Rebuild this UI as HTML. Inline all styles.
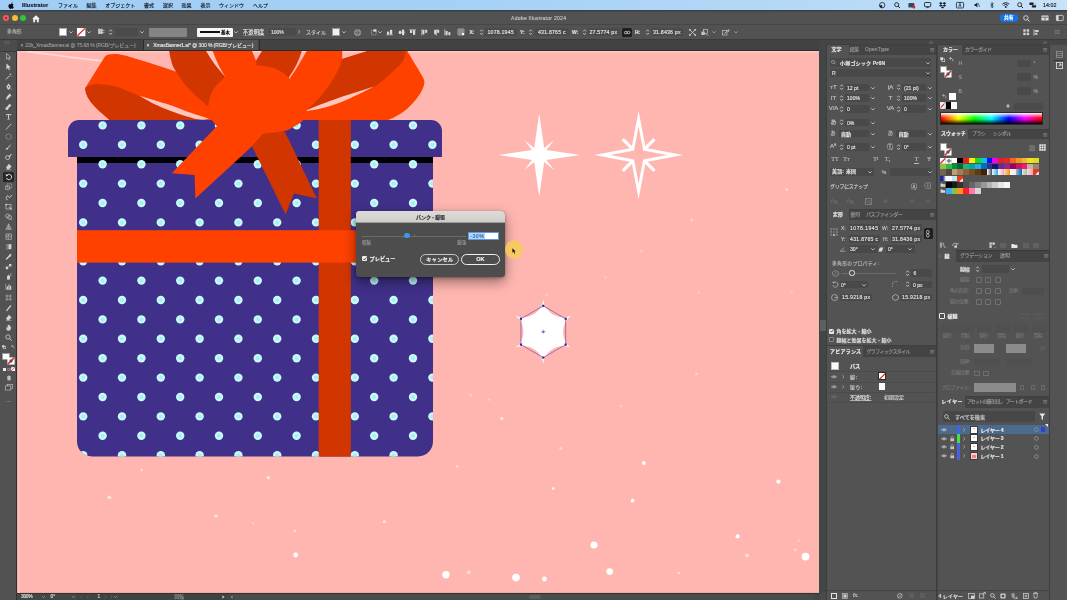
<!DOCTYPE html>
<html lang="ja"><head><meta charset="utf-8"><title>Adobe Illustrator 2024</title>
<style>
html,body{margin:0;padding:0}
body{width:1067px;height:600px;overflow:hidden;position:relative;background:#4b4b4b;font-family:"Liberation Sans","Noto Sans CJK JP",sans-serif}
.a{position:absolute;box-sizing:border-box}
#root{position:absolute;left:-8px;top:-8px;width:1083px;height:616px;overflow:hidden;filter:blur(0.45px)}
#in{position:absolute;left:8px;top:8px;width:1067px;height:600px;will-change:transform}
.t{white-space:nowrap;-webkit-text-stroke:0.14px currentColor}
svg{position:absolute;overflow:visible}
</style></head><body><div id="root"><div id="in">
<svg class="a" style="left:0;top:0" width="1067" height="600" viewBox="0 0 1067 600">
<defs><clipPath id="cv"><rect x="17.2" y="51" width="801.9" height="541.9"/></clipPath><clipPath id="bx"><path d="M77,157H433V441.500a15,15 0 0 1 -15,15H92a15,15 0 0 1 -15,-15Z"/></clipPath><clipPath id="ld"><path d="M68,157V132a12,12 0 0 1 12,-12H430a12,12 0 0 1 12,12V157Z"/></clipPath><g id="dt"><circle r="4.2" fill="#c8f9fb"/><circle r="2" fill="#a9eef1"/></g></defs>
<g clip-path="url(#cv)">
<rect x="17.2" y="51" width="801.9" height="541.9" fill="#ffb6b0"/>
<rect x="17" y="51" width="803" height="1.3" fill="#ffcdc6"/>
<rect x="17.2" y="51" width="2.6" height="542" fill="#ffc1bb"/>
<path d="M27,51.6 C50,54 76,58.6 104,61" fill="none" stroke="#ffdcd6" stroke-width="1.7" opacity=".95"/>
<circle cx="470.6" cy="395" r="1.5" fill="#fff" opacity="0.35"/>
<circle cx="489.4" cy="399.5" r="1.3" fill="#fff" opacity="0.3"/>
<circle cx="501.7" cy="418.5" r="1.7" fill="#fff" opacity="0.6"/>
<circle cx="620.6" cy="406.2" r="1.2" fill="#fff" opacity="0.35"/>
<circle cx="560.8" cy="448.5" r="1.6" fill="#fff" opacity="0.45"/>
<circle cx="643.8" cy="462.9" r="2" fill="#fff" opacity="1"/>
<circle cx="457.2" cy="466.4" r="1.4" fill="#fff" opacity="0.4"/>
<circle cx="553.2" cy="488.6" r="1.4" fill="#fff" opacity="0.85"/>
<circle cx="632.6" cy="500.7" r="1.9" fill="#fff" opacity="1"/>
<circle cx="778.4" cy="481.6" r="2.1" fill="#fff" opacity="1"/>
<circle cx="737.6" cy="536.4" r="2.1" fill="#fff" opacity="1"/>
<circle cx="594" cy="545" r="3.6" fill="#fff" opacity="1"/>
<circle cx="747" cy="555.5" r="2" fill="#fff" opacity="0.5"/>
<circle cx="795" cy="549.8" r="1.6" fill="#fff" opacity="0.4"/>
<circle cx="798.7" cy="540.5" r="1.2" fill="#fff" opacity="0.35"/>
<circle cx="805.5" cy="556.6" r="3.9" fill="#fff" opacity="1"/>
<circle cx="446" cy="574.8" r="3.7" fill="#fff" opacity="1"/>
<circle cx="468.9" cy="572.3" r="1.7" fill="#fff" opacity="0.6"/>
<circle cx="516" cy="577.6" r="3.8" fill="#fff" opacity="1"/>
<circle cx="544.4" cy="579" r="2.4" fill="#fff" opacity="1"/>
<circle cx="609.7" cy="571.6" r="3.3" fill="#fff" opacity="1"/>
<circle cx="678.7" cy="573" r="1.3" fill="#fff" opacity="0.5"/>
<circle cx="696.5" cy="374" r="1.5" fill="#fff" opacity="0.35"/>
<circle cx="786.7" cy="189.5" r="1.5" fill="#fff" opacity="0.45"/>
<circle cx="691.7" cy="220" r="1.5" fill="#fff" opacity="0.4"/>
<circle cx="641.5" cy="251" r="1.4" fill="#fff" opacity="0.35"/>
<circle cx="605.5" cy="277.5" r="1.3" fill="#fff" opacity="0.3"/>
<circle cx="791.5" cy="292.5" r="1.3" fill="#fff" opacity="0.3"/>
<circle cx="699" cy="292.5" r="1.3" fill="#fff" opacity="0.3"/>
<circle cx="546.5" cy="295" r="1.3" fill="#fff" opacity="0.3"/>
<circle cx="141.7" cy="470" r="1.4" fill="#fff" opacity="0.45"/>
<circle cx="109.3" cy="497.3" r="1.9" fill="#fff" opacity="0.6"/>
<circle cx="268.3" cy="477.7" r="1.8" fill="#fff" opacity="0.6"/>
<circle cx="216" cy="516" r="1.8" fill="#fff" opacity="0.55"/>
<circle cx="295" cy="531" r="1.5" fill="#fff" opacity="0.45"/>
<circle cx="295.7" cy="555" r="2.4" fill="#fff" opacity="1"/>
<circle cx="253" cy="523" r="1.2" fill="#fff" opacity="0.3"/>
<circle cx="384.3" cy="521.7" r="1.6" fill="#fff" opacity="0.6"/>
<polygon points="539.2,113.2 544.4,149.8 580.2,155.0 544.4,160.2 539.2,196.8 534.0,160.2 498.2,155.0 534.0,149.8" fill="#fff"/>
<polygon points="539.2,134.0 541.5,152.7 560.2,155.0 541.5,157.3 539.2,176.0 536.9,157.3 518.2,155.0 536.9,152.7" transform="rotate(45 539.2 155)" fill="#fff"/>
<polygon points="638.6,118.6 644.4,149.2 675.2,155.0 644.4,160.8 638.6,191.4 632.8,160.8 602.0,155.0 632.8,149.2" fill="none" stroke="#fff" stroke-width="2.9" stroke-linejoin="miter" stroke-miterlimit="10"/>
<line x1="645.7" y1="162.1" x2="654.5" y2="170.9" stroke="#fff" stroke-width="3.2"/>
<line x1="631.5" y1="162.1" x2="622.7" y2="170.9" stroke="#fff" stroke-width="3.2"/>
<line x1="631.5" y1="147.9" x2="622.7" y2="139.1" stroke="#fff" stroke-width="3.2"/>
<line x1="645.7" y1="147.9" x2="654.5" y2="139.1" stroke="#fff" stroke-width="3.2"/>
<path d="M110.0,54.3 C111.1,54.2 114.3,53.8 116.8,54.0 C119.3,54.2 120.8,54.5 125.0,55.6 C129.2,56.7 136.1,58.9 141.7,60.6 C147.2,62.3 152.8,64.0 158.3,65.8 C163.9,67.6 163.9,67.3 175.0,71.3 C186.1,75.3 216.7,86.9 225.0,90.0 L215,121 L110.8,121.0 C108.2,118.6 98.9,110.8 95.0,106.7 C91.1,102.7 89.1,99.7 87.5,96.7 C85.9,93.8 85.3,91.0 85.3,89.0 C85.3,87.0 87.1,85.3 87.4,84.6 L104.6,57 Q106.6,54.2 110,54.3 Z" fill="#ff4100"/>
<path d="M85.6,87.6 C86.6,87.1 89.3,85.3 91.7,84.7 C94.1,84.1 96.4,84.0 100.0,84.2 C103.6,84.4 109.1,84.9 113.3,85.8 C117.5,86.7 120.5,88.0 125.0,89.7 C129.4,91.5 134.7,93.9 140.0,96.3 C145.3,98.7 151.2,101.6 157.0,104.0 C162.8,106.4 168.2,108.2 175.0,110.5 C181.8,112.8 192.8,116.2 198.0,118.0 C203.2,119.8 204.7,120.5 206.0,121.0 L110.8,121.0 C108.2,118.6 98.9,110.8 95.0,106.7 C91.1,102.7 89.1,99.7 87.5,96.7 C85.9,93.8 85.6,90.5 85.3,89.0 C85.0,87.5 85.5,87.8 85.6,87.6 Z" fill="#d23600"/>
<path d="M139.0,95.4 C142.0,96.3 151.0,99.1 157.0,101.0 C163.0,102.9 169.5,104.8 175.0,106.7 C180.5,108.6 184.3,110.6 190.0,112.6 C195.7,114.6 205.8,117.8 209.0,118.8 C207.2,118.9 203.7,120.4 198.0,119.3 C192.3,118.2 181.8,114.7 175.0,112.4 C168.2,110.1 163.0,108.1 157.0,105.3 C151.0,102.5 142.0,97.1 139.0,95.4 Z" fill="#ffc6be"/>
<path d="M169.2,51.0 C169.5,52.5 170.0,56.8 171.0,60.0 C172.0,63.2 172.1,65.3 175.0,70.0 C177.9,74.7 182.8,82.2 188.3,88.3 C193.9,94.4 205.0,103.6 208.3,106.7 L240,95 L225.2,76.7 L206.2,51 Z" fill="#d23600"/>
<path d="M206.2,51 L212.7,51 C216,60 220,69 225.4,77 C218,69 211,60 206.2,51 Z" fill="#ffc6be"/>
<path d="M212.7,51 L252,51 L256,60.5 L266,80 L240,95 L225.4,77 C220,69 216,60 212.7,51 Z" fill="#ff4100"/>
<path d="M262,51 L256,60.5 L258,80 L288.4,80 L289,77 C295,69 299,60 301.8,51 Z" fill="#d23600"/>
<path d="M306.7,51 L342.2,51 L342.2,59 L367.5,51 L407.3,51 C408.6,53.2 412.7,60.1 415.0,64.0 C417.3,67.9 419.7,71.5 421.3,74.5 C422.9,77.5 424.4,79.3 424.4,82.3 C424.3,85.2 423.0,88.7 421.0,92.2 C419.0,95.7 415.8,99.9 412.5,103.4 C409.2,106.9 405.6,110.4 401.3,113.3 C397.0,116.2 389.0,119.7 386.5,121.0 L300,121 L285,100 L289.600,78.500 C296,70 301,61 306.7,51 Z" fill="#ff4100"/>
<path d="M342.2,59 L367.5,51 L405.5,51 C405.4,52.0 405.6,54.9 404.8,57.0 C404.1,59.1 402.8,61.4 401.0,63.6 C399.2,65.8 396.8,67.9 394.0,70.5 C391.2,73.1 388.0,76.2 384.5,79.0 C381.0,81.8 378.4,84.8 373.0,87.3 C367.6,89.8 358.3,92.0 352.0,94.0 C345.7,96.0 340.7,97.5 335.0,99.4 C329.3,101.3 322.8,103.7 318.0,105.5 C313.2,107.3 308.2,109.2 306.3,110.0 C307.6,108.9 310.8,106.6 314.0,103.4 C317.2,100.2 322.0,95.0 325.3,90.8 C328.6,86.6 331.5,82.0 333.8,78.0 C336.1,74.0 338.0,70.1 339.4,66.9 C340.8,63.7 341.7,60.3 342.2,59.0 Z" fill="#d23600"/>
<path d="M305.5,110.7 C307.6,109.8 313.1,107.4 318.0,105.5 C322.9,103.6 329.3,101.2 335.0,99.2 C340.7,97.2 345.5,95.7 352.0,93.6 C358.5,91.5 370.3,87.8 374.0,86.6 C371.3,87.9 363.3,92.1 358.0,94.6 C352.7,97.1 347.7,99.6 342.0,101.8 C336.3,104.0 330.1,106.2 324.0,107.8 C317.9,109.4 308.6,110.7 305.5,111.3 Z" fill="#ffc6be"/>
<path d="M77,157H433V441.500a15,15 0 0 1 -15,15H92a15,15 0 0 1 -15,-15Z" fill="#40308a"/>
<rect x="77" y="157" width="356" height="6" fill="#000"/>
<path d="M68,157V131a11,11 0 0 1 11,-11H431a11,11 0 0 1 11,11V157Z" fill="#40308a"/>
<g clip-path="url(#ld)">
<use href="#dt" x="102.6" y="125.4"/>
<use href="#dt" x="141.4" y="125.4"/>
<use href="#dt" x="180.2" y="125.4"/>
<use href="#dt" x="219.0" y="125.4"/>
<use href="#dt" x="257.8" y="125.4"/>
<use href="#dt" x="296.6" y="125.4"/>
<use href="#dt" x="335.4" y="125.4"/>
<use href="#dt" x="374.2" y="125.4"/>
<use href="#dt" x="413.0" y="125.4"/>
<use href="#dt" x="83.2" y="144.8"/>
<use href="#dt" x="122.0" y="144.8"/>
<use href="#dt" x="160.8" y="144.8"/>
<use href="#dt" x="199.6" y="144.8"/>
<use href="#dt" x="238.4" y="144.8"/>
<use href="#dt" x="277.2" y="144.8"/>
<use href="#dt" x="316.0" y="144.8"/>
<use href="#dt" x="354.8" y="144.8"/>
<use href="#dt" x="393.6" y="144.8"/>
<use href="#dt" x="432.4" y="144.8"/>
</g>
<g clip-path="url(#bx)">
<use href="#dt" x="102.6" y="164.2"/>
<use href="#dt" x="141.4" y="164.2"/>
<use href="#dt" x="180.2" y="164.2"/>
<use href="#dt" x="219.0" y="164.2"/>
<use href="#dt" x="257.8" y="164.2"/>
<use href="#dt" x="296.6" y="164.2"/>
<use href="#dt" x="335.4" y="164.2"/>
<use href="#dt" x="374.2" y="164.2"/>
<use href="#dt" x="413.0" y="164.2"/>
<use href="#dt" x="83.2" y="183.6"/>
<use href="#dt" x="122.0" y="183.6"/>
<use href="#dt" x="160.8" y="183.6"/>
<use href="#dt" x="199.6" y="183.6"/>
<use href="#dt" x="238.4" y="183.6"/>
<use href="#dt" x="277.2" y="183.6"/>
<use href="#dt" x="316.0" y="183.6"/>
<use href="#dt" x="354.8" y="183.6"/>
<use href="#dt" x="393.6" y="183.6"/>
<use href="#dt" x="432.4" y="183.6"/>
<use href="#dt" x="102.6" y="203.0"/>
<use href="#dt" x="141.4" y="203.0"/>
<use href="#dt" x="180.2" y="203.0"/>
<use href="#dt" x="219.0" y="203.0"/>
<use href="#dt" x="257.8" y="203.0"/>
<use href="#dt" x="296.6" y="203.0"/>
<use href="#dt" x="335.4" y="203.0"/>
<use href="#dt" x="374.2" y="203.0"/>
<use href="#dt" x="413.0" y="203.0"/>
<use href="#dt" x="83.2" y="222.4"/>
<use href="#dt" x="122.0" y="222.4"/>
<use href="#dt" x="160.8" y="222.4"/>
<use href="#dt" x="199.6" y="222.4"/>
<use href="#dt" x="238.4" y="222.4"/>
<use href="#dt" x="277.2" y="222.4"/>
<use href="#dt" x="316.0" y="222.4"/>
<use href="#dt" x="354.8" y="222.4"/>
<use href="#dt" x="393.6" y="222.4"/>
<use href="#dt" x="432.4" y="222.4"/>
<use href="#dt" x="102.6" y="241.8"/>
<use href="#dt" x="141.4" y="241.8"/>
<use href="#dt" x="180.2" y="241.8"/>
<use href="#dt" x="219.0" y="241.8"/>
<use href="#dt" x="257.8" y="241.8"/>
<use href="#dt" x="296.6" y="241.8"/>
<use href="#dt" x="335.4" y="241.8"/>
<use href="#dt" x="374.2" y="241.8"/>
<use href="#dt" x="413.0" y="241.8"/>
<use href="#dt" x="83.2" y="261.2"/>
<use href="#dt" x="122.0" y="261.2"/>
<use href="#dt" x="160.8" y="261.2"/>
<use href="#dt" x="199.6" y="261.2"/>
<use href="#dt" x="238.4" y="261.2"/>
<use href="#dt" x="277.2" y="261.2"/>
<use href="#dt" x="316.0" y="261.2"/>
<use href="#dt" x="354.8" y="261.2"/>
<use href="#dt" x="393.6" y="261.2"/>
<use href="#dt" x="432.4" y="261.2"/>
<use href="#dt" x="102.6" y="280.6"/>
<use href="#dt" x="141.4" y="280.6"/>
<use href="#dt" x="180.2" y="280.6"/>
<use href="#dt" x="219.0" y="280.6"/>
<use href="#dt" x="257.8" y="280.6"/>
<use href="#dt" x="296.6" y="280.6"/>
<use href="#dt" x="335.4" y="280.6"/>
<use href="#dt" x="374.2" y="280.6"/>
<use href="#dt" x="413.0" y="280.6"/>
<use href="#dt" x="83.2" y="300.0"/>
<use href="#dt" x="122.0" y="300.0"/>
<use href="#dt" x="160.8" y="300.0"/>
<use href="#dt" x="199.6" y="300.0"/>
<use href="#dt" x="238.4" y="300.0"/>
<use href="#dt" x="277.2" y="300.0"/>
<use href="#dt" x="316.0" y="300.0"/>
<use href="#dt" x="354.8" y="300.0"/>
<use href="#dt" x="393.6" y="300.0"/>
<use href="#dt" x="432.4" y="300.0"/>
<use href="#dt" x="102.6" y="319.4"/>
<use href="#dt" x="141.4" y="319.4"/>
<use href="#dt" x="180.2" y="319.4"/>
<use href="#dt" x="219.0" y="319.4"/>
<use href="#dt" x="257.8" y="319.4"/>
<use href="#dt" x="296.6" y="319.4"/>
<use href="#dt" x="335.4" y="319.4"/>
<use href="#dt" x="374.2" y="319.4"/>
<use href="#dt" x="413.0" y="319.4"/>
<use href="#dt" x="83.2" y="338.8"/>
<use href="#dt" x="122.0" y="338.8"/>
<use href="#dt" x="160.8" y="338.8"/>
<use href="#dt" x="199.6" y="338.8"/>
<use href="#dt" x="238.4" y="338.8"/>
<use href="#dt" x="277.2" y="338.8"/>
<use href="#dt" x="316.0" y="338.8"/>
<use href="#dt" x="354.8" y="338.8"/>
<use href="#dt" x="393.6" y="338.8"/>
<use href="#dt" x="432.4" y="338.8"/>
<use href="#dt" x="102.6" y="358.2"/>
<use href="#dt" x="141.4" y="358.2"/>
<use href="#dt" x="180.2" y="358.2"/>
<use href="#dt" x="219.0" y="358.2"/>
<use href="#dt" x="257.8" y="358.2"/>
<use href="#dt" x="296.6" y="358.2"/>
<use href="#dt" x="335.4" y="358.2"/>
<use href="#dt" x="374.2" y="358.2"/>
<use href="#dt" x="413.0" y="358.2"/>
<use href="#dt" x="83.2" y="377.6"/>
<use href="#dt" x="122.0" y="377.6"/>
<use href="#dt" x="160.8" y="377.6"/>
<use href="#dt" x="199.6" y="377.6"/>
<use href="#dt" x="238.4" y="377.6"/>
<use href="#dt" x="277.2" y="377.6"/>
<use href="#dt" x="316.0" y="377.6"/>
<use href="#dt" x="354.8" y="377.6"/>
<use href="#dt" x="393.6" y="377.6"/>
<use href="#dt" x="432.4" y="377.6"/>
<use href="#dt" x="102.6" y="397.0"/>
<use href="#dt" x="141.4" y="397.0"/>
<use href="#dt" x="180.2" y="397.0"/>
<use href="#dt" x="219.0" y="397.0"/>
<use href="#dt" x="257.8" y="397.0"/>
<use href="#dt" x="296.6" y="397.0"/>
<use href="#dt" x="335.4" y="397.0"/>
<use href="#dt" x="374.2" y="397.0"/>
<use href="#dt" x="413.0" y="397.0"/>
<use href="#dt" x="83.2" y="416.4"/>
<use href="#dt" x="122.0" y="416.4"/>
<use href="#dt" x="160.8" y="416.4"/>
<use href="#dt" x="199.6" y="416.4"/>
<use href="#dt" x="238.4" y="416.4"/>
<use href="#dt" x="277.2" y="416.4"/>
<use href="#dt" x="316.0" y="416.4"/>
<use href="#dt" x="354.8" y="416.4"/>
<use href="#dt" x="393.6" y="416.4"/>
<use href="#dt" x="432.4" y="416.4"/>
<use href="#dt" x="102.6" y="435.8"/>
<use href="#dt" x="141.4" y="435.8"/>
<use href="#dt" x="180.2" y="435.8"/>
<use href="#dt" x="219.0" y="435.8"/>
<use href="#dt" x="257.8" y="435.8"/>
<use href="#dt" x="296.6" y="435.8"/>
<use href="#dt" x="335.4" y="435.8"/>
<use href="#dt" x="374.2" y="435.8"/>
<use href="#dt" x="413.0" y="435.8"/>
<use href="#dt" x="83.2" y="455.2"/>
<use href="#dt" x="122.0" y="455.2"/>
<use href="#dt" x="160.8" y="455.2"/>
<use href="#dt" x="199.6" y="455.2"/>
<use href="#dt" x="238.4" y="455.2"/>
<use href="#dt" x="277.2" y="455.2"/>
<use href="#dt" x="316.0" y="455.2"/>
<use href="#dt" x="354.8" y="455.2"/>
<use href="#dt" x="393.6" y="455.2"/>
<use href="#dt" x="432.4" y="455.2"/>
</g>
<rect x="318.7" y="120" width="32.1" height="336.500" fill="#d23600"/>
<rect x="77" y="230.2" width="356" height="32.4" fill="#ff4100"/>
<polygon points="215.6,127.6 171.8,173.2 194.6,174.9 195.4,198.5 252,146.2 268,130 240,110" fill="#ff4100"/>
<polygon points="252,146.2 285.6,214.5 294,193.4 316.8,198.5 284.8,131.5 264.500,132" fill="#d23600"/>
<path d="M225.0,76.7 C227.5,75.3 234.6,70.4 240.0,68.5 C245.4,66.6 251.7,65.5 257.5,65.5 C263.3,65.5 269.9,66.6 275.0,68.6 C280.1,70.6 284.4,73.5 288.4,77.4 C292.4,81.3 295.9,86.5 299.0,92.0 C302.1,97.5 306.0,105.8 306.7,110.5 C307.4,115.2 305.2,117.4 303.3,120.0 C301.4,122.6 298.1,124.2 295.0,126.0 C291.9,127.8 289.9,129.8 284.8,131.0 C279.7,132.2 271.1,132.7 264.5,133.5 C257.9,134.3 251.8,136.4 245.0,136.0 C238.2,135.6 229.2,133.2 224.0,131.0 C218.8,128.8 216.4,125.8 214.0,123.0 C211.6,120.2 210.2,116.8 209.3,114.0 C208.4,111.2 207.7,110.0 208.3,106.0 C208.9,102.0 210.2,94.9 213.0,90.0 C215.8,85.1 223.0,78.9 225.0,76.7 Z" fill="#ff4100"/>
<path d="M543.3,298.2 C543.3,312.3 560.1,322.0 572.3,314.9 C560.1,322.0 560.1,341.4 572.3,348.4 C560.1,341.4 543.3,351.1 543.3,365.2 C543.3,351.1 526.5,341.4 514.3,348.4 C526.5,341.4 526.5,322.0 514.3,314.9 C526.5,322.0 543.3,312.3 543.3,298.2 Z" fill="#fff"/>
<polygon points="543.3,305.8 565.7,318.8 565.7,344.6 543.3,357.6 520.9,344.6 520.9,318.8" fill="none" stroke="#a05aa8" stroke-width="1" opacity=".85"/>
<rect x="542.2" y="304.7" width="2.2" height="2.2" fill="#2b2b96"/>
<rect x="564.6" y="317.6" width="2.2" height="2.2" fill="#2b2b96"/>
<rect x="564.6" y="343.5" width="2.2" height="2.2" fill="#2b2b96"/>
<rect x="542.2" y="356.5" width="2.2" height="2.2" fill="#2b2b96"/>
<rect x="519.8" y="343.5" width="2.2" height="2.2" fill="#2b2b96"/>
<rect x="519.8" y="317.6" width="2.2" height="2.2" fill="#2b2b96"/>
<circle cx="543.3" cy="331.7" r="1.3" fill="#4a5ab8"/>
<path d="M540.6999999999999,331.7 H545.9 M543.3,329.09999999999997 V334.3" stroke="#8aa0e0" stroke-width=".5" opacity=".7"/>
</g></svg>
<div class="a" style="left:-8px;top:-8px;width:1083px;height:18px;background:linear-gradient(90deg,#a0cdf5 0%,#a6d1f6 45%,#b8daf7 80%,#c9e3f9 100%);"></div>
<div class="a" style="left:-8px;top:10px;width:1083px;height:14.5px;background:#525252;"></div>
<div class="a" style="left:-8px;top:24.5px;width:1083px;height:14.5px;background:#525252;"></div>
<div class="a" style="left:-8px;top:39px;width:1083px;height:12px;background:#424242;"></div>
<div class="a" style="left:-8px;top:50px;width:25px;height:558px;background:#525252;"></div>
<div class="a" style="left:17px;top:592.9px;width:803px;height:15.3px;background:#444746;"></div>
<div class="a" style="left:819.5px;top:45px;width:255.5px;height:563px;background:#454545;"></div>
<svg class="a" style="left:8px;top:1.6px" width="6.2" height="7" viewBox="0 0 17 20"><path d="M13.6,10.6c0-2.3,1.9-3.4,2-3.5c-1.1-1.6-2.8-1.8-3.4-1.8c-1.4-.1-2.8,.9-3.500,.9c-.7,0-1.900-.8-3.100-.8C4,5.400,2.500,6.300,1.700,7.700c-1.700,2.900-.4,7.200,1.200,9.600c.8,1.200,1.700,2.500,3,2.400c1.200,0,1.700-.8,3.100-.8s1.900,.8,3.100,.7c1.300,0,2.100-1.200,2.900-2.300c.9-1.300,1.300-2.600,1.300-2.700C16.300,14.600,13.600,13.600,13.600,10.600z M11.300,3.600c.7-.8,1.100-1.900,1-3C11.300,.6,10.200,1.200,9.500,2C8.900,2.700,8.400,3.800,8.500,4.900C9.600,5,10.600,4.400,11.300,3.600z" fill="#0a0a0a"/></svg>
<div class="a t" style="left:22.00px;top:1.80px;font-size:5.5px;line-height:6.60px;color:#10151c;font-weight:bold;letter-spacing:0.08px;">Illustrator</div>
<div class="a t" style="left:58.00px;top:2.10px;font-size:5px;line-height:6.00px;color:#141a22;">ファイル</div>
<div class="a t" style="left:86.60px;top:2.10px;font-size:5px;line-height:6.00px;color:#141a22;">編集</div>
<div class="a t" style="left:105.20px;top:2.10px;font-size:5px;line-height:6.00px;color:#141a22;">オブジェクト</div>
<div class="a t" style="left:144.00px;top:2.10px;font-size:5px;line-height:6.00px;color:#141a22;">書式</div>
<div class="a t" style="left:163.00px;top:2.10px;font-size:5px;line-height:6.00px;color:#141a22;">選択</div>
<div class="a t" style="left:181.50px;top:2.10px;font-size:5px;line-height:6.00px;color:#141a22;">効果</div>
<div class="a t" style="left:200.50px;top:2.10px;font-size:5px;line-height:6.00px;color:#141a22;">表示</div>
<div class="a t" style="left:219.00px;top:2.10px;font-size:5px;line-height:6.00px;color:#141a22;">ウィンドウ</div>
<div class="a t" style="left:253.00px;top:2.10px;font-size:5px;line-height:6.00px;color:#141a22;">ヘルプ</div>
<svg class="a" style="left:879.3px;top:1.7999999999999998px" width="6.4" height="6.4" viewBox="0 0 6.4 6.4"><circle cx="3.2" cy="3.2" r="2.7" fill="none" stroke="#1a1f26" stroke-width=".8"/><path d="M3.2,3.2 L3.2,5.9 A2.7,2.7 0 0 1 .5,3.2 Z" fill="#1a1f26"/></svg>
<svg class="a" style="left:893.8px;top:1.7999999999999998px" width="6.4" height="6.4" viewBox="0 0 6.4 6.4"><circle cx="2.7" cy="2.7" r="2" fill="none" stroke="#1a1f26" stroke-width=".9"/><path d="M4.2,4.2 L6,6" stroke="#1a1f26" stroke-width="1"/></svg>
<svg class="a" style="left:907.9px;top:1.7999999999999998px" width="7.6" height="6.6" viewBox="0 0 7.6 6.6"><rect x=".4" y="1" width="6" height="4.6" rx="1.2" fill="#3a4652"/><circle cx="5.8" cy="5" r="1.5" fill="#d8241f"/></svg>
<svg class="a" style="left:924.4px;top:2px" width="7.2" height="6" viewBox="0 0 7.2 6"><rect x=".5" y=".5" width="6.2" height="4.2" rx=".8" fill="none" stroke="#1a1f26" stroke-width=".9"/><path d="M2.4,5.6H4.8" stroke="#1a1f26" stroke-width=".8"/></svg>
<svg class="a" style="left:939.4px;top:1.7999999999999998px" width="7.2" height="6.6" viewBox="0 0 7.2 6.6"><path d="M1.8,0 L3.6,1.2 L1.8,2.4 L0,1.2Z M5.4,0 L7.2,1.2 L5.4,2.4 L3.6,1.2Z M1.8,2.4 L3.6,3.6 L1.8,4.800 L0,3.600Z M5.4,2.4 L7.2,3.6 L5.4,4.800 L3.6,3.600Z M3.6,4.300 L5.200,5.400 L3.600,6.500 L2,5.400Z" fill="#1a1f26"/></svg>
<svg class="a" style="left:956px;top:1.7999999999999998px" width="8" height="6.4" viewBox="0 0 8 6.4"><rect x=".4" y=".4" width="7.200" height="5.600" rx=".8" fill="none" stroke="#1a1f26" stroke-width=".8"/><text x="4" y="5" font-size="4.600" font-weight="bold" text-anchor="middle" fill="#1a1f26" font-family="Liberation Sans,sans-serif">A</text></svg>
<svg class="a" style="left:974px;top:2px" width="6" height="6" viewBox="0 0 6 6"><path d="M.6,2.100 H1.800 L3.400,.6 V5.400 L1.800,3.900 H.6Z" fill="#1a1f26"/><path d="M4.200,1 L5.600,5" stroke="#1a1f26" stroke-width=".6"/></svg>
<svg class="a" style="left:990px;top:1.7999999999999998px" width="4" height="6.4" viewBox="0 0 4 6.4"><path d="M.5,1.800 L3.300,4.500 L2,5.900 V.5 L3.300,1.900 L.5,4.600" fill="none" stroke="#1a1f26" stroke-width=".7"/></svg>
<svg class="a" style="left:1002.2px;top:2px" width="7.6" height="6" viewBox="0 0 7.6 6"><path d="M.4,2.200 A4.800,4.800 0 0 1 7.200,2.200 M1.600,3.500 A3.100,3.100 0 0 1 6,3.500" fill="none" stroke="#1a1f26" stroke-width="1"/><circle cx="3.800" cy="5" r=".9" fill="#1a1f26"/></svg>
<svg class="a" style="left:1016.8px;top:1.7999999999999998px" width="6.4" height="6.4" viewBox="0 0 6.4 6.4"><circle cx="2.7" cy="2.7" r="2" fill="none" stroke="#1a1f26" stroke-width=".9"/><path d="M4.2,4.2 L6,6" stroke="#1a1f26" stroke-width="1"/></svg>
<svg class="a" style="left:1029.4px;top:2px" width="7.600" height="6" viewBox="0 0 7.6 6"><rect x=".3" y=".6" width="4.400" height="2.400" rx=".8" fill="#1a1f26"/><rect x="2.800" y="3.200" width="4.400" height="2.400" rx=".8" fill="#1a1f26"/><circle cx="6.6" cy="1.800" r=".8" fill="#e8b838"/></svg>
<div class="a t" style="left:1043.00px;top:1.92px;font-size:5.3px;line-height:6.36px;color:#10151c;letter-spacing:0.05px;">14:02</div>
<div class="a" style="left:-8px;top:9.8px;width:1083px;height:2.1px;background:linear-gradient(180deg,#363e47,#464a4c);"></div>
<div class="a" style="left:3px;top:15.3px;width:6px;height:6px;background:#ee5f57;border-radius:50%"></div>
<div class="a" style="left:11.7px;top:15.3px;width:6px;height:6px;background:#f6be2f;border-radius:50%"></div>
<div class="a" style="left:20px;top:15.3px;width:6px;height:6px;background:#2dc840;border-radius:50%"></div>
<div class="a" style="left:5px;top:17.3px;width:2px;height:2px;background:#8c1c14;border-radius:50%"></div>
<svg class="a" style="left:31.6px;top:14.6px" width="8" height="7.4" viewBox="0 0 8 7.4"><path d="M4,0.300 L7.800,3.700 H6.800 V7.200 H4.900 V4.700 H3.100 V7.200 H1.200 V3.700 H.2 Z" fill="#f0f0f0"/></svg>
<div class="a t" style="left:511.00px;top:14.94px;font-size:5.1px;line-height:6.12px;color:#c4c4c4;letter-spacing:0.246px;">Adobe Illustrator 2024</div>
<div class="a" style="left:999.5px;top:14px;width:18.5px;height:8.2px;background:#1473e6;border-radius:4.1px"></div>
<div class="a t" style="left:1004.00px;top:15.22px;font-size:4.8px;line-height:5.76px;color:#fff;font-weight:bold;">共有</div>
<svg class="a" style="left:1022.5px;top:14.6px" width="7" height="7" viewBox="0 0 7 7"><circle cx="2.900" cy="2.900" r="2.200" fill="none" stroke="#ddd" stroke-width=".9"/><path d="M4.500,4.500 L6.600,6.600" stroke="#ddd" stroke-width="1"/></svg>
<svg class="a" style="left:1041px;top:15.2px" width="8" height="6" viewBox="0 0 8 6"><rect x=".4" y=".4" width="7.200" height="5.200" rx=".6" fill="#ddd"/><path d="M.4,2.200 H7.600 M4,2.200 V5.600" stroke="#454545" stroke-width=".7"/></svg>
<svg class="a" style="left:1055.5px;top:15.200px" width="7.600" height="6" viewBox="0 0 7.6 6"><rect x=".4" y=".4" width="6.800" height="5.200" rx=".6" fill="none" stroke="#ddd" stroke-width=".8"/><rect x=".4" y=".4" width="2.200" height="5.200" fill="#ddd"/></svg>
<div class="a" style="left:-8px;top:24.1px;width:1083px;height:0.7px;background:#464646;"></div>
<div class="a t" style="left:7.00px;top:29.16px;font-size:4.9px;line-height:5.88px;color:#b9b9b9;">多角形</div>
<div class="a" style="left:58.7px;top:28.2px;width:8.4px;height:8.2px;background:#fff;border:0.5px solid #aaa"></div>
<svg class="a" style="left:69.0px;top:31.2px" width="4.0" height="2.4" viewBox="0 0 4 2.4"><path d="M0.3,0.3 L2,2 L3.7,0.3" fill="none" stroke="#cfcfcf" stroke-width="0.8"/></svg>
<svg class="a" style="left:77px;top:28.2px" width="8.4" height="8.2" viewBox="0 0 8.4 8.2"><rect width="8.4" height="8.2" fill="#fff"/><path d="M0.4,7.799999999999999 L8.0,0.4" stroke="#e0202a" stroke-width="1.3"/></svg>
<svg class="a" style="left:87.2px;top:31.2px" width="4.0" height="2.4" viewBox="0 0 4 2.4"><path d="M0.3,0.3 L2,2 L3.7,0.3" fill="none" stroke="#cfcfcf" stroke-width="0.8"/></svg>
<div class="a t" style="left:98.00px;top:29.16px;font-size:4.9px;line-height:5.88px;color:#e2e2e2;font-weight:bold;">線:</div>
<svg class="a" style="left:109.4px;top:28.900000000000002px" width="3.2" height="6.4" viewBox="0 0 3.2 6.4"><path d="M0.3,2.4 L1.6,0.8 L2.9,2.4 M0.3,4 L1.6,5.6 L2.9,4" fill="none" stroke="#cfcfcf" stroke-width="0.8"/></svg>
<div class="a" style="left:115px;top:28.2px;width:23px;height:8px;background:#4b4b4b;border-radius:1px"></div>
<svg class="a" style="left:140.3px;top:31.2px" width="4.0" height="2.4" viewBox="0 0 4 2.4"><path d="M0.3,0.3 L2,2 L3.7,0.3" fill="none" stroke="#cfcfcf" stroke-width="0.8"/></svg>
<div class="a" style="left:149.3px;top:27.8px;width:37.7px;height:9.2px;background:#848484;border-radius:1px"></div>
<div class="a" style="left:197px;top:27.9px;width:36.4px;height:8.9px;background:#f6f6f6;border-radius:1px"></div>
<div class="a" style="left:199.6px;top:31.1px;width:20.4px;height:2px;background:#111;"></div>
<div class="a t" style="left:221.00px;top:29.66px;font-size:4.4px;line-height:5.28px;color:#111;font-weight:bold;">基本</div>
<svg class="a" style="left:234.3px;top:31.2px" width="4.0" height="2.4" viewBox="0 0 4 2.4"><path d="M0.3,0.3 L2,2 L3.7,0.3" fill="none" stroke="#cfcfcf" stroke-width="0.8"/></svg>
<div class="a t" style="left:242.80px;top:28.98px;font-size:5.2px;line-height:6.24px;color:#ececec;letter-spacing:0.245px;text-decoration:underline;text-decoration-color:#777;text-underline-offset:1px;text-decoration-thickness:0.4px">不透明度</div>
<div class="a" style="left:269px;top:28.2px;width:27px;height:8px;background:#4b4b4b;border-radius:1px"></div>
<div class="a t" style="left:271.00px;top:29.10px;font-size:5px;line-height:6.00px;color:#e2e2e2;">100%</div>
<svg class="a" style="left:298px;top:30.3px" width="2.400" height="3.600" viewBox="0 0 2.4 3.6"><path d="M.4,.3 L2,1.800 L.4,3.300" fill="none" stroke="#cfcfcf" stroke-width=".7"/></svg>
<div class="a t" style="left:306.00px;top:29.10px;font-size:5px;line-height:6.00px;color:#c9c9c9;">スタイル</div>
<div class="a" style="left:331.5px;top:28.2px;width:8.2px;height:8.2px;background:#f2f2f2;border:0.5px solid #999"></div>
<svg class="a" style="left:341.5px;top:31.2px" width="4.0" height="2.4" viewBox="0 0 4 2.4"><path d="M0.3,0.3 L2,2 L3.7,0.3" fill="none" stroke="#cfcfcf" stroke-width="0.8"/></svg>
<svg class="a" style="left:353.5px;top:28.5px" width="7.200" height="7.200" viewBox="0 0 7.2 7.2"><circle cx="3.600" cy="3.600" r="3.100" fill="#8a8a8a" stroke="#b5b5b5" stroke-width=".6"/><path d="M.6,3.600 H6.600 M3.600,.6 C2,2 2,5.200 3.600,6.600 M3.600,.6 C5.200,2 5.200,5.200 3.600,6.600" fill="none" stroke="#555" stroke-width=".5"/></svg>
<svg class="a" style="left:371px;top:28.900000000000002px" width="7" height="6.400" viewBox="0 0 7 6.4"><rect x=".4" y="1.400" width="4.800" height="4.400" fill="none" stroke="#bdbdbd" stroke-width=".7" stroke-dasharray="1 .6"/><rect x="2.400" y=".3" width="3" height="2.400" fill="#d8d8d8"/></svg>
<svg class="a" style="left:377.5px;top:31.400000000000002px" width="4.0" height="2.4" viewBox="0 0 4 2.4"><path d="M0.3,0.3 L2,2 L3.7,0.3" fill="none" stroke="#cfcfcf" stroke-width="0.8"/></svg>
<svg class="a" style="left:386.4px;top:28.700000000000003px" width="7.200" height="6.800" viewBox="0 0 7.2 6.8"><path d="M.3,5.800 H6.900" stroke="#dcdcdc" stroke-width=".7"/><rect x="1" y="2.600" width="2.200" height="2.800" fill="#dcdcdc"/><rect x="4" y=".8" width="2.200" height="4.600" fill="#dcdcdc"/></svg>
<svg class="a" style="left:397.9px;top:28.700000000000003px" width="7.200" height="6.800" viewBox="0 0 7.2 6.8"><path d="M.3,3.400 H6.900" stroke="#dcdcdc" stroke-width=".7"/><rect x="1" y="1.800" width="2.200" height="3.200" fill="#dcdcdc"/><rect x="4" y=".6" width="2.200" height="5.600" fill="#dcdcdc"/></svg>
<svg class="a" style="left:409.4px;top:28.700000000000003px" width="7.200" height="6.800" viewBox="0 0 7.2 6.8"><path d="M.3,.8 H6.900" stroke="#dcdcdc" stroke-width=".7"/><rect x="1" y="1.200" width="2.200" height="2.800" fill="#dcdcdc"/><rect x="4" y="1.200" width="2.200" height="4.600" fill="#dcdcdc"/></svg>
<svg class="a" style="left:421.4px;top:28.700000000000003px" width="7.200" height="6.800" viewBox="0 0 7.2 6.8"><path d="M.8,.3 V6.500" stroke="#dcdcdc" stroke-width=".7"/><rect x="1.400" y=".8" width="2" height="4.600" fill="#dcdcdc"/><rect x="4.200" y=".8" width="2" height="3" fill="#dcdcdc"/></svg>
<svg class="a" style="left:432.9px;top:28.700000000000003px" width="7.200" height="6.800" viewBox="0 0 7.2 6.8"><path d="M3.600,.3 V6.500" stroke="#dcdcdc" stroke-width=".7"/><rect x="1.200" y=".8" width="2" height="4.600" fill="#dcdcdc"/><rect x="4.200" y=".8" width="2" height="3" fill="#dcdcdc"/></svg>
<svg class="a" style="left:443.9px;top:28.700000000000003px" width="7.200" height="6.800" viewBox="0 0 7.2 6.8"><path d="M.8,.3 V6.500" stroke="#dcdcdc" stroke-width=".7"/><rect x="1.600" y="2" width="2" height="4.200" fill="#dcdcdc"/><rect x="4.400" y="3.200" width="2" height="3" fill="#dcdcdc"/></svg>
<svg class="a" style="left:457px;top:28.1px" width="8" height="8" viewBox="0 0 8 8"><path d="M1,1H7V7H1Z M1,3H7 M1,5H7 M3,1V7 M5,1V7" fill="none" stroke="#cfcfcf" stroke-width=".6"/><rect x="5" y="5" width="2" height="2" fill="#fff"/></svg>
<div class="a t" style="left:469.50px;top:29.10px;font-size:5px;line-height:6.00px;color:#e2e2e2;font-weight:bold;">X:</div>
<svg class="a" style="left:479.9px;top:28.900000000000002px" width="3.2" height="6.4" viewBox="0 0 3.2 6.4"><path d="M0.3,2.4 L1.6,0.8 L2.9,2.4 M0.3,4 L1.6,5.6 L2.9,4" fill="none" stroke="#cfcfcf" stroke-width="0.8"/></svg>
<div class="a" style="left:485px;top:28.2px;width:32px;height:8px;background:#4b4b4b;border-radius:1px"></div>
<div class="a t" style="left:487.50px;top:28.98px;font-size:5.2px;line-height:6.24px;color:#e2e2e2;letter-spacing:0.2px;">1078.1945</div>
<div class="a t" style="left:520.00px;top:29.10px;font-size:5px;line-height:6.00px;color:#e2e2e2;font-weight:bold;">Y:</div>
<svg class="a" style="left:529.4px;top:28.900000000000002px" width="3.2" height="6.4" viewBox="0 0 3.2 6.4"><path d="M0.3,2.4 L1.6,0.8 L2.9,2.4 M0.3,4 L1.6,5.6 L2.9,4" fill="none" stroke="#cfcfcf" stroke-width="0.8"/></svg>
<div class="a" style="left:535px;top:28.2px;width:34px;height:8px;background:#4b4b4b;border-radius:1px"></div>
<div class="a t" style="left:538.00px;top:28.98px;font-size:5.2px;line-height:6.24px;color:#e2e2e2;letter-spacing:0.2px;">431.8765 c</div>
<div class="a t" style="left:572.00px;top:29.10px;font-size:5px;line-height:6.00px;color:#e2e2e2;font-weight:bold;">W:</div>
<svg class="a" style="left:583.4px;top:28.900000000000002px" width="3.2" height="6.4" viewBox="0 0 3.2 6.4"><path d="M0.3,2.4 L1.6,0.8 L2.9,2.4 M0.3,4 L1.6,5.6 L2.9,4" fill="none" stroke="#cfcfcf" stroke-width="0.8"/></svg>
<div class="a" style="left:587.5px;top:28.2px;width:32px;height:8px;background:#4b4b4b;border-radius:1px"></div>
<div class="a t" style="left:589.50px;top:28.98px;font-size:5.2px;line-height:6.24px;color:#e2e2e2;letter-spacing:0.2px;">27.5774 px</div>
<div class="a" style="left:622px;top:27.8px;width:9.5px;height:8.8px;background:#1e1e1e;border-radius:1.5px"></div>
<svg class="a" style="left:623.5px;top:30.5px" width="6.400" height="3.200" viewBox="0 0 6.4 3.2"><rect x=".4" y=".4" width="2.800" height="2.400" rx="1.200" fill="none" stroke="#eee" stroke-width=".7"/><rect x="3.200" y=".4" width="2.800" height="2.400" rx="1.200" fill="none" stroke="#eee" stroke-width=".7"/></svg>
<div class="a t" style="left:635.00px;top:29.10px;font-size:5px;line-height:6.00px;color:#e2e2e2;font-weight:bold;">H:</div>
<svg class="a" style="left:646.4px;top:28.900000000000002px" width="3.2" height="6.4" viewBox="0 0 3.2 6.4"><path d="M0.3,2.4 L1.6,0.8 L2.9,2.4 M0.3,4 L1.6,5.6 L2.9,4" fill="none" stroke="#cfcfcf" stroke-width="0.8"/></svg>
<div class="a" style="left:651px;top:28.2px;width:32px;height:8px;background:#4b4b4b;border-radius:1px"></div>
<div class="a t" style="left:653.00px;top:28.98px;font-size:5.2px;line-height:6.24px;color:#e2e2e2;letter-spacing:0.2px;">31.8436 px</div>
<svg class="a" style="left:688.5px;top:28.700000000000003px" width="7" height="6.800" viewBox="0 0 7 6.8"><path d="M.6,.6 L6.400,6.200 M6.400,.6 L.6,6.200" stroke="#d0d0d0" stroke-width=".8"/><rect x="0" y="0" width="1.600" height="1.600" fill="#d0d0d0"/><rect x="5.400" y="5.200" width="1.600" height="1.600" fill="#d0d0d0"/><rect x="5.400" y="0" width="1.600" height="1.600" fill="#d0d0d0"/><rect x="0" y="5.200" width="1.600" height="1.600" fill="#d0d0d0"/></svg>
<svg class="a" style="left:701px;top:28.700000000000003px" width="8" height="6.800" viewBox="0 0 8 6.8"><rect x="2.400" y=".4" width="4" height="4" fill="none" stroke="#c4c4c4" stroke-width=".7"/><rect x=".4" y="2.600" width="3.400" height="3.400" fill="#c4c4c4"/><path d="M5,5.400 L7.400,6.400" stroke="#c4c4c4" stroke-width=".6"/></svg>
<svg class="a" style="left:711.5px;top:31.400000000000002px" width="4.0" height="2.4" viewBox="0 0 4 2.4"><path d="M0.3,0.3 L2,2 L3.7,0.3" fill="none" stroke="#aaa" stroke-width="0.8"/></svg>
<svg class="a" style="left:722px;top:28.700000000000003px" width="8" height="6.800" viewBox="0 0 8 6.8"><rect x=".6" y="1.600" width="4.400" height="4.400" fill="none" stroke="#c4c4c4" stroke-width=".7"/><path d="M2.400,4.400 L7.200,.6 L6.400,2.800" fill="none" stroke="#c4c4c4" stroke-width=".9"/></svg>
<svg class="a" style="left:733.5px;top:31.400000000000002px" width="4.0" height="2.4" viewBox="0 0 4 2.4"><path d="M0.3,0.3 L2,2 L3.7,0.3" fill="none" stroke="#aaa" stroke-width="0.8"/></svg>
<svg class="a" style="left:1022.5px;top:28.900000000000002px" width="6.400" height="6.400" viewBox="0 0 6.4 6.4"><rect x=".3" y=".3" width="2.400" height="2.400" fill="#d6d6d6"/><rect x="3.700" y=".3" width="2.400" height="2.400" fill="#d6d6d6"/><rect x=".3" y="3.700" width="2.400" height="2.400" fill="#d6d6d6"/><rect x="3.700" y="3.700" width="2.400" height="2.400" fill="#d6d6d6"/></svg>
<svg class="a" style="left:1033px;top:28.700000000000003px" width="7" height="6.800" viewBox="0 0 7 6.8"><path d="M1,.3 V6.500" stroke="#d6d6d6" stroke-width=".9"/><rect x="2.200" y="1" width="3.400" height="2" fill="#d6d6d6"/><rect x="2.200" y="3.800" width="2.200" height="2" fill="#d6d6d6"/></svg>
<svg class="a" style="left:1054px;top:30.1px" width="6" height="4" viewBox="0 0 6 4"><path d="M.3,.6H5.700M.3,2H5.700M.3,3.400H5.700" stroke="#888" stroke-width=".6"/></svg>
<div class="a" style="left:-8px;top:38.8px;width:1083px;height:0.7px;background:#3a3a3a;"></div>
<div class="a" style="left:17px;top:39.5px;width:126px;height:11px;background:#434343;"></div>
<div class="a" style="left:143.6px;top:39.5px;width:114.4px;height:11.5px;background:#535353;"></div>
<div class="a" style="left:142.6px;top:39.5px;width:0.6px;height:11px;background:#2c2c2c;"></div>
<div class="a" style="left:258.6px;top:39.5px;width:0.6px;height:11px;background:#2c2c2c;"></div>
<div class="a t" style="left:20.60px;top:42.10px;font-size:5px;line-height:6.00px;color:#9a9a9a;">×</div>
<div class="a t" style="left:25.20px;top:42.10px;font-size:5px;line-height:6.00px;color:#989898;letter-spacing:-0.068px;">22b_XmasBanner.ai @ 75.68 % (RGB/プレビュー)</div>
<div class="a t" style="left:146.60px;top:42.10px;font-size:5px;line-height:6.00px;color:#dcdcdc;">×</div>
<div class="a t" style="left:153.20px;top:42.10px;font-size:5px;line-height:6.00px;color:#e8e8e8;letter-spacing:-0.079px;">XmasBanner1.ai* @ 300 % (RGB/プレビュー)</div>
<div class="a" style="left:-8px;top:39.5px;width:25px;height:11px;background:#4c4c4c;"></div>
<svg class="a" style="left:4px;top:41px" width="6" height="3" viewBox="0 0 6 3"><path d="M.3,.6H5.700M.3,2.200H5.700" stroke="#7a7a7a" stroke-width=".5"/></svg>
<div class="a" style="left:17px;top:50.3px;width:803px;height:0.9px;background:#2b2b2b;"></div>
<div class="a" style="left:819.5px;top:39.5px;width:255.5px;height:6px;background:#454545;"></div>
<div class="a" style="left:819px;top:45px;width:7.3px;height:563px;background:#434646;"></div>
<div class="a" style="left:819.6px;top:320px;width:6px;height:10.5px;background:#5d6060;border-radius:1px"></div>
<div class="a" style="left:819px;top:592.7px;width:7.3px;height:15.3px;background:#4a4a4a;"></div>
<div class="a" style="left:827px;top:45px;width:109.3px;height:563px;background:#535353;"></div>
<div class="a" style="left:937.5px;top:45px;width:111.5px;height:563px;background:#535353;"></div>
<div class="a" style="left:1050px;top:45px;width:25px;height:563px;background:#535353;"></div>
<div class="a" style="left:936.1px;top:45px;width:1.3px;height:563px;background:#3c3c3c;"></div>
<div class="a" style="left:1049.3px;top:45px;width:1.2px;height:563px;background:#3e3e3e;"></div>
<div class="a" style="left:826.3px;top:45px;width:0.8px;height:563px;background:#3e3e3e;"></div>
<div class="a" style="left:827px;top:45px;width:109.3px;height:9.5px;background:#444444;"></div>
<div class="a" style="left:827px;top:44.4px;width:109.3px;height:0.7px;background:#3f3f3f;"></div>
<div class="a" style="left:827px;top:45px;width:22px;height:9.8px;background:#535353;"></div>
<div class="a t" style="left:831.50px;top:47.01px;font-size:4.9px;line-height:5.88px;color:#f0f0f0;font-weight:bold;letter-spacing:0.203px;">文字</div>
<div class="a t" style="left:849.50px;top:47.01px;font-size:4.9px;line-height:5.88px;color:#9a9a9a;letter-spacing:-0.297px;">段落</div>
<div class="a t" style="left:865.00px;top:47.01px;font-size:4.9px;line-height:5.88px;color:#9a9a9a;letter-spacing:0.203px;">OpenType</div>
<svg class="a" style="left:929.8px;top:48.15px" width="4.4" height="3.6" viewBox="0 0 4.4 3.6"><path d="M.2,.5H4.2M.2,1.800H4.200M.2,3.100H4.200" stroke="#9a9a9a" stroke-width=".55"/></svg>
<svg class="a" style="left:928.5px;top:40.6px" width="4.4" height="3" viewBox="0 0 4.4 3"><path d="M.3,.3 L1.800,1.500 L.3,2.700 M2.400,.3 L3.900,1.500 L2.400,2.700" fill="none" stroke="#8a8a8a" stroke-width=".6"/></svg>
<svg class="a" style="left:1043px;top:40.6px" width="4.4" height="3" viewBox="0 0 4.4 3"><path d="M.3,.3 L1.800,1.500 L.3,2.700 M2.400,.3 L3.900,1.500 L2.400,2.700" fill="none" stroke="#8a8a8a" stroke-width=".6"/></svg>
<div class="a" style="left:829.5px;top:58.3px;width:101px;height:8.4px;background:#494949;border-radius:0.8px"></div>
<svg class="a" style="left:830.6px;top:60.4px" width="5.6" height="4.6" viewBox="0 0 5.6 4.6"><circle cx="1.900" cy="1.900" r="1.500" fill="none" stroke="#bbb" stroke-width=".6"/><path d="M3,3 L4.200,4.200 M4.600,1.600 L5.400,2.400" stroke="#bbb" stroke-width=".6"/></svg>
<div class="a t" style="left:840.00px;top:59.60px;font-size:5px;line-height:6.00px;color:#e2e2e2;font-weight:bold;letter-spacing:0.194px;">小塚ゴシック Pr6N</div>
<svg class="a" style="left:925.5px;top:61.599999999999994px" width="4.0" height="2.4" viewBox="0 0 4 2.4"><path d="M0.3,0.3 L2,2 L3.7,0.3" fill="none" stroke="#cfcfcf" stroke-width="0.8"/></svg>
<div class="a" style="left:829.5px;top:69.2px;width:101px;height:8px;background:#494949;border-radius:0.8px"></div>
<div class="a t" style="left:832.00px;top:70.30px;font-size:5px;line-height:6.00px;color:#e2e2e2;">R</div>
<svg class="a" style="left:925.5px;top:72.3px" width="4.0" height="2.4" viewBox="0 0 4 2.4"><path d="M0.3,0.3 L2,2 L3.7,0.3" fill="none" stroke="#cfcfcf" stroke-width="0.8"/></svg>
<div class="a t" style="left:830.29px;top:84.00px;font-size:6px;line-height:7.20px;color:#c4c4c4;">тT</div>
<svg class="a" style="left:840.4px;top:84.39999999999999px" width="3.2" height="6.4" viewBox="0 0 3.2 6.4"><path d="M0.3,2.4 L1.6,0.8 L2.9,2.4 M0.3,4 L1.6,5.6 L2.9,4" fill="none" stroke="#cfcfcf" stroke-width="0.8"/></svg>
<div class="a" style="left:845px;top:83.8px;width:23.5px;height:7.6px;background:#494949;border-radius:0.8px"></div>
<div class="a t" style="left:847.00px;top:84.64px;font-size:5.1px;line-height:6.12px;color:#e2e2e2;">12 pt</div>
<svg class="a" style="left:871.0px;top:86.69999999999999px" width="4.0" height="2.4" viewBox="0 0 4 2.4"><path d="M0.3,0.3 L2,2 L3.7,0.3" fill="none" stroke="#cfcfcf" stroke-width="0.8"/></svg>
<div class="a t" style="left:887.66px;top:84.00px;font-size:6px;line-height:7.20px;color:#c4c4c4;">ţA</div>
<svg class="a" style="left:896.9px;top:84.39999999999999px" width="3.2" height="6.4" viewBox="0 0 3.2 6.4"><path d="M0.3,2.4 L1.6,0.8 L2.9,2.4 M0.3,4 L1.6,5.6 L2.9,4" fill="none" stroke="#cfcfcf" stroke-width="0.8"/></svg>
<div class="a" style="left:901.5px;top:83.8px;width:24px;height:7.6px;background:#494949;border-radius:0.8px"></div>
<div class="a t" style="left:904.00px;top:84.64px;font-size:5.1px;line-height:6.12px;color:#e2e2e2;">(21 pt)</div>
<svg class="a" style="left:928.0px;top:86.69999999999999px" width="4.0" height="2.4" viewBox="0 0 4 2.4"><path d="M0.3,0.3 L2,2 L3.7,0.3" fill="none" stroke="#cfcfcf" stroke-width="0.8"/></svg>
<div class="a t" style="left:830.83px;top:94.60px;font-size:6px;line-height:7.20px;color:#c4c4c4;">ІT</div>
<svg class="a" style="left:840.4px;top:95.0px" width="3.2" height="6.4" viewBox="0 0 3.2 6.4"><path d="M0.3,2.4 L1.6,0.8 L2.9,2.4 M0.3,4 L1.6,5.6 L2.9,4" fill="none" stroke="#cfcfcf" stroke-width="0.8"/></svg>
<div class="a" style="left:845px;top:94.4px;width:23.5px;height:7.6px;background:#494949;border-radius:0.8px"></div>
<div class="a t" style="left:847.00px;top:95.24px;font-size:5.1px;line-height:6.12px;color:#e2e2e2;">100%</div>
<svg class="a" style="left:871.0px;top:97.3px" width="4.0" height="2.4" viewBox="0 0 4 2.4"><path d="M0.3,0.3 L2,2 L3.7,0.3" fill="none" stroke="#cfcfcf" stroke-width="0.8"/></svg>
<div class="a t" style="left:888.66px;top:94.60px;font-size:6px;line-height:7.20px;color:#c4c4c4;">T</div>
<svg class="a" style="left:896.9px;top:95.0px" width="3.2" height="6.4" viewBox="0 0 3.2 6.4"><path d="M0.3,2.4 L1.6,0.8 L2.9,2.4 M0.3,4 L1.6,5.6 L2.9,4" fill="none" stroke="#cfcfcf" stroke-width="0.8"/></svg>
<div class="a" style="left:901.5px;top:94.4px;width:24px;height:7.6px;background:#494949;border-radius:0.8px"></div>
<div class="a t" style="left:904.00px;top:95.24px;font-size:5.1px;line-height:6.12px;color:#e2e2e2;">100%</div>
<svg class="a" style="left:928.0px;top:97.3px" width="4.0" height="2.4" viewBox="0 0 4 2.4"><path d="M0.3,0.3 L2,2 L3.7,0.3" fill="none" stroke="#cfcfcf" stroke-width="0.8"/></svg>
<div class="a t" style="left:828.66px;top:105.40px;font-size:6px;line-height:7.20px;color:#c4c4c4;">V/A</div>
<svg class="a" style="left:840.4px;top:105.8px" width="3.2" height="6.4" viewBox="0 0 3.2 6.4"><path d="M0.3,2.4 L1.6,0.8 L2.9,2.4 M0.3,4 L1.6,5.6 L2.9,4" fill="none" stroke="#cfcfcf" stroke-width="0.8"/></svg>
<div class="a" style="left:845px;top:105.2px;width:23.5px;height:7.6px;background:#494949;border-radius:0.8px"></div>
<div class="a t" style="left:847.00px;top:106.04px;font-size:5.1px;line-height:6.12px;color:#e2e2e2;">0</div>
<svg class="a" style="left:871.0px;top:108.1px" width="4.0" height="2.4" viewBox="0 0 4 2.4"><path d="M0.3,0.3 L2,2 L3.7,0.3" fill="none" stroke="#cfcfcf" stroke-width="0.8"/></svg>
<div class="a t" style="left:886.72px;top:105.40px;font-size:6px;line-height:7.20px;color:#c4c4c4;">VA</div>
<svg class="a" style="left:896.9px;top:105.8px" width="3.2" height="6.4" viewBox="0 0 3.2 6.4"><path d="M0.3,2.4 L1.6,0.8 L2.9,2.4 M0.3,4 L1.6,5.6 L2.9,4" fill="none" stroke="#cfcfcf" stroke-width="0.8"/></svg>
<div class="a" style="left:901.5px;top:105.2px;width:24px;height:7.6px;background:#494949;border-radius:0.8px"></div>
<div class="a t" style="left:904.00px;top:106.04px;font-size:5.1px;line-height:6.12px;color:#e2e2e2;">0</div>
<svg class="a" style="left:928.0px;top:108.1px" width="4.0" height="2.4" viewBox="0 0 4 2.4"><path d="M0.3,0.3 L2,2 L3.7,0.3" fill="none" stroke="#cfcfcf" stroke-width="0.8"/></svg>
<div class="a t" style="left:830.49px;top:119.00px;font-size:6px;line-height:7.20px;color:#c4c4c4;">あ</div>
<svg class="a" style="left:840.4px;top:119.39999999999999px" width="3.2" height="6.4" viewBox="0 0 3.2 6.4"><path d="M0.3,2.4 L1.6,0.8 L2.9,2.4 M0.3,4 L1.6,5.6 L2.9,4" fill="none" stroke="#cfcfcf" stroke-width="0.8"/></svg>
<div class="a" style="left:845px;top:118.8px;width:23.5px;height:7.6px;background:#494949;border-radius:0.8px"></div>
<div class="a t" style="left:847.00px;top:119.64px;font-size:5.1px;line-height:6.12px;color:#e2e2e2;">0%</div>
<svg class="a" style="left:871.0px;top:121.69999999999999px" width="4.0" height="2.4" viewBox="0 0 4 2.4"><path d="M0.3,0.3 L2,2 L3.7,0.3" fill="none" stroke="#cfcfcf" stroke-width="0.8"/></svg>
<div class="a t" style="left:830.30px;top:130.16px;font-size:5.4px;line-height:6.48px;color:#b0b0b0;">あ</div>
<div class="a" style="left:838.5px;top:129.6px;width:30px;height:7.6px;background:#494949;border-radius:0.8px"></div>
<div class="a t" style="left:841.00px;top:130.50px;font-size:5px;line-height:6.00px;color:#e2e2e2;font-weight:bold;">自動</div>
<svg class="a" style="left:871.0px;top:132.5px" width="4.0" height="2.4" viewBox="0 0 4 2.4"><path d="M0.3,0.3 L2,2 L3.7,0.3" fill="none" stroke="#cfcfcf" stroke-width="0.8"/></svg>
<div class="a t" style="left:887.80px;top:130.16px;font-size:5.4px;line-height:6.48px;color:#b0b0b0;">あ</div>
<div class="a" style="left:896px;top:129.6px;width:29.5px;height:7.6px;background:#494949;border-radius:0.8px"></div>
<div class="a t" style="left:898.50px;top:130.50px;font-size:5px;line-height:6.00px;color:#e2e2e2;font-weight:bold;">自動</div>
<svg class="a" style="left:928.0px;top:132.5px" width="4.0" height="2.4" viewBox="0 0 4 2.4"><path d="M0.3,0.3 L2,2 L3.7,0.3" fill="none" stroke="#cfcfcf" stroke-width="0.8"/></svg>
<div class="a t" style="left:829.88px;top:143.40px;font-size:6px;line-height:7.20px;color:#c4c4c4;">Aª</div>
<svg class="a" style="left:840.4px;top:143.8px" width="3.2" height="6.4" viewBox="0 0 3.2 6.4"><path d="M0.3,2.4 L1.6,0.8 L2.9,2.4 M0.3,4 L1.6,5.6 L2.9,4" fill="none" stroke="#cfcfcf" stroke-width="0.8"/></svg>
<div class="a" style="left:845px;top:143.2px;width:23.5px;height:7.6px;background:#494949;border-radius:0.8px"></div>
<div class="a t" style="left:847.00px;top:144.04px;font-size:5.1px;line-height:6.12px;color:#e2e2e2;">0 pt</div>
<svg class="a" style="left:870.5px;top:146.10000000000002px" width="4.0" height="2.4" viewBox="0 0 4 2.4"><path d="M0.3,0.3 L2,2 L3.7,0.3" fill="none" stroke="#cfcfcf" stroke-width="0.8"/></svg>
<div class="a t" style="left:886.80px;top:143.16px;font-size:6.4px;line-height:7.68px;color:#c4c4c4;">Ⓣ</div>
<svg class="a" style="left:896.9px;top:143.8px" width="3.2" height="6.4" viewBox="0 0 3.2 6.4"><path d="M0.3,2.4 L1.6,0.8 L2.9,2.4 M0.3,4 L1.6,5.6 L2.9,4" fill="none" stroke="#cfcfcf" stroke-width="0.8"/></svg>
<div class="a" style="left:901.5px;top:143.2px;width:24px;height:7.6px;background:#494949;border-radius:0.8px"></div>
<div class="a t" style="left:904.00px;top:144.04px;font-size:5.1px;line-height:6.12px;color:#e2e2e2;">0°</div>
<svg class="a" style="left:928.0px;top:146.10000000000002px" width="4.0" height="2.4" viewBox="0 0 4 2.4"><path d="M0.3,0.3 L2,2 L3.7,0.3" fill="none" stroke="#cfcfcf" stroke-width="0.8"/></svg>
<div class="a t" style="left:831.33px;top:156.00px;font-size:6px;line-height:7.20px;color:#bdbdbd;font-family:'Liberation Serif',serif;">TT</div>
<div class="a t" style="left:843.29px;top:156.00px;font-size:6px;line-height:7.20px;color:#bdbdbd;font-family:'Liberation Serif',serif;">Tт</div>
<div class="a t" style="left:873.16px;top:156.00px;font-size:6px;line-height:7.20px;color:#bdbdbd;font-family:'Liberation Serif',serif;">T¹</div>
<div class="a t" style="left:884.65px;top:156.00px;font-size:6px;line-height:7.20px;color:#bdbdbd;font-family:'Liberation Serif',serif;">T₁</div>
<div class="a t" style="left:914.66px;top:156.00px;font-size:6px;line-height:7.20px;color:#bdbdbd;font-family:'Liberation Serif',serif;">T</div>
<div class="a t" style="left:927.16px;top:156.00px;font-size:6px;line-height:7.20px;color:#bdbdbd;font-family:'Liberation Serif',serif;">Ŧ</div>
<div class="a" style="left:914.3px;top:162.6px;width:4.4px;height:0.5px;background:#bdbdbd;"></div>
<div class="a" style="left:829.5px;top:168.2px;width:44px;height:7.6px;background:#494949;border-radius:0.8px"></div>
<div class="a t" style="left:832.00px;top:169.16px;font-size:4.9px;line-height:5.88px;color:#e2e2e2;font-weight:bold;letter-spacing:0.287px;">英語: 米国</div>
<svg class="a" style="left:868.0px;top:171.10000000000002px" width="4.0" height="2.4" viewBox="0 0 4 2.4"><path d="M0.3,0.3 L2,2 L3.7,0.3" fill="none" stroke="#cfcfcf" stroke-width="0.8"/></svg>
<div class="a t" style="left:881.68px;top:169.40px;font-size:5px;line-height:6.00px;color:#b5b5b5;">ªa</div>
<div class="a" style="left:889.5px;top:168.2px;width:41.5px;height:7.6px;background:#494949;border-radius:0.8px"></div>
<svg class="a" style="left:928.0px;top:171.10000000000002px" width="4.0" height="2.4" viewBox="0 0 4 2.4"><path d="M0.3,0.3 L2,2 L3.7,0.3" fill="none" stroke="#cfcfcf" stroke-width="0.8"/></svg>
<div class="a t" style="left:830.00px;top:183.40px;font-size:5px;line-height:6.00px;color:#d0d0d0;letter-spacing:-0.288px;">グリフにスナップ</div>
<div class="a t" style="left:910.80px;top:182.56px;font-size:6.4px;line-height:7.68px;color:#bbb;">Ⓐ</div>
<div class="a t" style="left:924.60px;top:182.32px;font-size:6.8px;line-height:8.16px;color:#bbb;">ⓘ</div>
<div class="a t" style="left:830.21px;top:197.28px;font-size:6.2px;line-height:7.44px;color:#6e6e6e;">Ag</div>
<div class="a t" style="left:846.21px;top:197.28px;font-size:6.2px;line-height:7.44px;color:#6e6e6e;">Ag</div>
<div class="a t" style="left:864.21px;top:197.28px;font-size:6.2px;line-height:7.44px;color:#6e6e6e;">Ag</div>
<div class="a t" style="left:883.43px;top:197.28px;font-size:6.2px;line-height:7.44px;color:#6e6e6e;">A</div>
<div class="a t" style="left:909.93px;top:197.28px;font-size:6.2px;line-height:7.44px;color:#6e6e6e;">A</div>
<div class="a t" style="left:925.93px;top:197.28px;font-size:6.2px;line-height:7.44px;color:#6e6e6e;">A</div>
<div class="a" style="left:864.5px;top:197.6px;width:7.4px;height:7px;background:transparent;border:0.6px solid #7a7a7a"></div>
<div class="a" style="left:827px;top:209.4px;width:109.3px;height:10.6px;background:#444444;"></div>
<div class="a" style="left:827px;top:208.8px;width:109.3px;height:0.7px;background:#3f3f3f;"></div>
<div class="a" style="left:827px;top:209.4px;width:22px;height:10.9px;background:#535353;"></div>
<div class="a t" style="left:833.00px;top:211.96px;font-size:4.9px;line-height:5.88px;color:#f0f0f0;font-weight:bold;letter-spacing:0.203px;">変形</div>
<div class="a t" style="left:850.50px;top:211.96px;font-size:4.9px;line-height:5.88px;color:#9a9a9a;letter-spacing:-0.297px;">整列</div>
<div class="a t" style="left:866.00px;top:211.96px;font-size:4.9px;line-height:5.88px;color:#9a9a9a;letter-spacing:-0.306px;">パスファインダー</div>
<svg class="a" style="left:929.8px;top:213.10000000000002px" width="4.4" height="3.6" viewBox="0 0 4.4 3.6"><path d="M.2,.5H4.2M.2,1.800H4.200M.2,3.100H4.200" stroke="#9a9a9a" stroke-width=".55"/></svg>
<svg class="a" style="left:829.6px;top:228px" width="8" height="8" viewBox="0 0 8 8"><path d="M1,1H7V7H1Z" fill="none" stroke="#aaa" stroke-width=".5" stroke-dasharray=".8 .6"/><rect x="0.30000000000000004" y="0.30000000000000004" width="1.4" height="1.4" fill="#8f8f8f"/><rect x="0.30000000000000004" y="3.3" width="1.4" height="1.4" fill="#8f8f8f"/><rect x="0.30000000000000004" y="6.3" width="1.4" height="1.4" fill="#8f8f8f"/><rect x="3.3" y="0.30000000000000004" width="1.4" height="1.4" fill="#8f8f8f"/><rect x="3.3" y="3.3" width="1.4" height="1.4" fill="#8f8f8f"/><rect x="3.3" y="6.3" width="1.4" height="1.4" fill="#fff"/><rect x="6.3" y="0.30000000000000004" width="1.4" height="1.4" fill="#8f8f8f"/><rect x="6.3" y="3.3" width="1.4" height="1.4" fill="#8f8f8f"/><rect x="6.3" y="6.3" width="1.4" height="1.4" fill="#8f8f8f"/></svg>
<div class="a t" style="left:841.00px;top:224.60px;font-size:5px;line-height:6.00px;color:#c9c9c9;">X:</div>
<div class="a" style="left:848.5px;top:223.79999999999998px;width:31px;height:7.6px;background:#494949;border-radius:0.8px"></div>
<div class="a t" style="left:850.00px;top:224.64px;font-size:5.1px;line-height:6.12px;color:#e2e2e2;letter-spacing:0.488px;">1078.1945</div>
<div class="a t" style="left:882.00px;top:224.60px;font-size:5px;line-height:6.00px;color:#c9c9c9;">W:</div>
<div class="a" style="left:890.5px;top:223.79999999999998px;width:31px;height:7.6px;background:#494949;border-radius:0.8px"></div>
<div class="a t" style="left:892.00px;top:224.64px;font-size:5.1px;line-height:6.12px;color:#e2e2e2;letter-spacing:0.309px;">27.5774 px</div>
<div class="a t" style="left:841.00px;top:236.00px;font-size:5px;line-height:6.00px;color:#c9c9c9;">Y:</div>
<div class="a" style="left:848.5px;top:235.2px;width:31px;height:7.6px;background:#494949;border-radius:0.8px"></div>
<div class="a t" style="left:850.00px;top:236.04px;font-size:5.1px;line-height:6.12px;color:#e2e2e2;letter-spacing:0.309px;">431.8765 c</div>
<div class="a t" style="left:883.00px;top:236.00px;font-size:5px;line-height:6.00px;color:#c9c9c9;">H:</div>
<div class="a" style="left:890.5px;top:235.2px;width:31px;height:7.6px;background:#494949;border-radius:0.8px"></div>
<div class="a t" style="left:892.00px;top:236.04px;font-size:5.1px;line-height:6.12px;color:#e2e2e2;letter-spacing:0.309px;">31.8436 px</div>
<div class="a" style="left:923.5px;top:227.6px;width:9.5px;height:11.6px;background:#1f1f1f;border-radius:1.5px"></div>
<svg class="a" style="left:926.4px;top:229.6px" width="3.6" height="7.6" viewBox="0 0 3.6 7.6"><rect x=".5" y=".4" width="2.600" height="3.200" rx="1.300" fill="none" stroke="#eee" stroke-width=".7"/><rect x=".5" y="4" width="2.600" height="3.200" rx="1.300" fill="none" stroke="#eee" stroke-width=".7"/></svg>
<svg class="a" style="left:839.5px;top:246.6px" width="5.6" height="4.6" viewBox="0 0 5.6 4.6"><path d="M.3,4.200 H5.300 M.3,4.200 L4.300,.6" fill="none" stroke="#bdbdbd" stroke-width=".7"/></svg>
<div class="a" style="left:848.5px;top:245.2px;width:29px;height:7.6px;background:#494949;border-radius:0.8px"></div>
<div class="a t" style="left:850.00px;top:246.04px;font-size:5.1px;line-height:6.12px;color:#e2e2e2;">30°</div>
<svg class="a" style="left:870.5px;top:248.10000000000002px" width="4.0" height="2.4" viewBox="0 0 4 2.4"><path d="M0.3,0.3 L2,2 L3.7,0.3" fill="none" stroke="#cfcfcf" stroke-width="0.8"/></svg>
<svg class="a" style="left:877.5px;top:246.6px" width="5.6" height="4.8" viewBox="0 0 5.6 4.8"><path d="M1.800,.4 H5.300 L3.800,4.400 H.3 Z" fill="#d8d8d8"/></svg>
<div class="a" style="left:886px;top:245.2px;width:28.5px;height:7.6px;background:#494949;border-radius:0.8px"></div>
<div class="a t" style="left:888.00px;top:246.04px;font-size:5.1px;line-height:6.12px;color:#e2e2e2;">0°</div>
<svg class="a" style="left:907.5px;top:248.10000000000002px" width="4.0" height="2.4" viewBox="0 0 4 2.4"><path d="M0.3,0.3 L2,2 L3.7,0.3" fill="none" stroke="#cfcfcf" stroke-width="0.8"/></svg>
<div class="a t" style="left:832.00px;top:260.86px;font-size:4.9px;line-height:5.88px;color:#b9b9b9;letter-spacing:0.212px;">多角形のプロパティ:</div>
<svg class="a" style="left:831.5px;top:269.6px" width="7" height="7" viewBox="0 0 7 7"><path d="M3.500,.4 L6.300,2 V5 L3.500,6.600 L.7,5 V2 Z" fill="none" stroke="#aaa" stroke-width=".6"/><text x="3.5" y="4.800" font-size="3.4" fill="#aaa" text-anchor="middle" font-family="Liberation Sans,sans-serif">#</text></svg>
<div class="a" style="left:840.5px;top:272.7px;width:55px;height:0.7px;background:#6c6c6c;"></div>
<div class="a" style="left:849.4px;top:270.4px;width:5.2px;height:5.2px;background:#535353;border-radius:50%;border:1.4px solid #e8e8e8"></div>
<svg class="a" style="left:905.9px;top:269.8px" width="3.2" height="6.4" viewBox="0 0 3.2 6.4"><path d="M0.3,2.4 L1.6,0.8 L2.9,2.4 M0.3,4 L1.6,5.6 L2.9,4" fill="none" stroke="#cfcfcf" stroke-width="0.8"/></svg>
<div class="a" style="left:911px;top:269.2px;width:20.5px;height:7.6px;background:#494949;border-radius:0.8px"></div>
<div class="a t" style="left:913.50px;top:270.04px;font-size:5.1px;line-height:6.12px;color:#e2e2e2;">6</div>
<svg class="a" style="left:831.5px;top:281.2px" width="6.6" height="6.6" viewBox="0 0 6.6 6.6"><path d="M1.400,1.800 A2.600,2.600 0 1 1 .8,4.200" fill="none" stroke="#c0c0c0" stroke-width=".7"/><path d="M.3,.6 L1.300,2.600 L3,1.600 Z" fill="#c0c0c0"/></svg>
<div class="a" style="left:839.5px;top:280.8px;width:28.5px;height:7.6px;background:#494949;border-radius:0.8px"></div>
<div class="a t" style="left:841.00px;top:281.64px;font-size:5.1px;line-height:6.12px;color:#e2e2e2;">0°</div>
<svg class="a" style="left:862.0px;top:283.7px" width="4.0" height="2.4" viewBox="0 0 4 2.4"><path d="M0.3,0.3 L2,2 L3.7,0.3" fill="none" stroke="#cfcfcf" stroke-width="0.8"/></svg>
<svg class="a" style="left:892px;top:281.4px" width="6" height="6.400" viewBox="0 0 6 6.4"><path d="M.6,6 V2.600 A2,2 0 0 1 2.600,.6 H5.600" fill="none" stroke="#aaa" stroke-width=".7" stroke-dasharray="1 .5"/></svg>
<svg class="a" style="left:905.9px;top:281.40000000000003px" width="3.2" height="6.4" viewBox="0 0 3.2 6.4"><path d="M0.3,2.4 L1.6,0.8 L2.9,2.4 M0.3,4 L1.6,5.6 L2.9,4" fill="none" stroke="#cfcfcf" stroke-width="0.8"/></svg>
<div class="a" style="left:911px;top:280.8px;width:20.5px;height:7.6px;background:#494949;border-radius:0.8px"></div>
<div class="a t" style="left:913.00px;top:281.64px;font-size:5.1px;line-height:6.12px;color:#e2e2e2;">0 px</div>
<svg class="a" style="left:831px;top:294px" width="7" height="7" viewBox="0 0 7 7"><circle cx="3.500" cy="3.500" r="3" fill="none" stroke="#c0c0c0" stroke-width=".7"/><path d="M3.500,3.500 H6.400" stroke="#c0c0c0" stroke-width=".7"/></svg>
<div class="a" style="left:840px;top:293.59999999999997px;width:32px;height:7.6px;background:#494949;border-radius:0.8px"></div>
<div class="a t" style="left:842.00px;top:294.44px;font-size:5.1px;line-height:6.12px;color:#e2e2e2;letter-spacing:0.309px;">15.9218 px</div>
<svg class="a" style="left:891.5px;top:294px" width="7" height="7" viewBox="0 0 7 7"><path d="M3.500,.4 L6.300,2 V5 L3.500,6.600 L.7,5 V2 Z" fill="none" stroke="#c0c0c0" stroke-width=".7"/></svg>
<div class="a" style="left:900px;top:293.59999999999997px;width:32px;height:7.6px;background:#494949;border-radius:0.8px"></div>
<div class="a t" style="left:902.00px;top:294.44px;font-size:5.1px;line-height:6.12px;color:#e2e2e2;letter-spacing:0.309px;">15.9218 px</div>
<div class="a" style="left:829.3px;top:328.6px;width:5.2px;height:5.2px;background:#e8e8e8;border-radius:1px"></div>
<svg class="a" style="left:830px;top:329.4px" width="3.8" height="3.6" viewBox="0 0 3.8 3.6"><path d="M.4,1.800 L1.500,3 L3.400,.5" fill="none" stroke="#333" stroke-width=".8"/></svg>
<div class="a t" style="left:836.50px;top:328.40px;font-size:5px;line-height:6.00px;color:#e2e2e2;font-weight:bold;letter-spacing:-0.003px;">角を拡大・縮小</div>
<div class="a" style="left:829.3px;top:337px;width:5.2px;height:5.2px;background:#4a4a4a;border-radius:1px;border:0.6px solid #8a8a8a"></div>
<div class="a t" style="left:836.50px;top:336.80px;font-size:5px;line-height:6.00px;color:#dadada;font-weight:bold;letter-spacing:-0.002px;">線幅と効果を拡大・縮小</div>
<div class="a" style="left:827px;top:345.8px;width:109.3px;height:11.4px;background:#444444;"></div>
<div class="a" style="left:827px;top:345.2px;width:109.3px;height:0.7px;background:#3f3f3f;"></div>
<div class="a" style="left:827px;top:345.8px;width:36px;height:11.700000000000001px;background:#535353;"></div>
<div class="a t" style="left:830.00px;top:348.76px;font-size:4.9px;line-height:5.88px;color:#f0f0f0;font-weight:bold;letter-spacing:0.35px;">アピアランス</div>
<div class="a t" style="left:866.50px;top:348.76px;font-size:4.9px;line-height:5.88px;color:#9a9a9a;letter-spacing:-0.519px;">グラフィックスタイル</div>
<svg class="a" style="left:929.8px;top:349.9px" width="4.4" height="3.6" viewBox="0 0 4.4 3.6"><path d="M.2,.5H4.2M.2,1.800H4.200M.2,3.100H4.200" stroke="#9a9a9a" stroke-width=".55"/></svg>
<div class="a" style="left:830.6px;top:362px;width:8px;height:8px;background:#fafafa;border:0.5px solid #bbb"></div>
<div class="a t" style="left:850.00px;top:363.14px;font-size:5.1px;line-height:6.12px;color:#f0f0f0;font-weight:bold;">パス</div>
<svg class="a" style="left:831px;top:374.59999999999997px" width="6" height="3.6" viewBox="0 0 6 3.6"><path d="M.3,1.800 Q3,-.8 5.700,1.800 Q3,4.400 .3,1.800 Z" fill="none" stroke="#bdbdbd" stroke-width=".6"/><circle cx="3" cy="1.800" r=".9" fill="#bdbdbd"/></svg>
<svg class="a" style="left:842px;top:374.59999999999997px" width="2.400" height="3.600" viewBox="0 0 2.4 3.6"><path d="M.4,.3 L2,1.800 L.4,3.300" fill="none" stroke="#bdbdbd" stroke-width=".6"/></svg>
<div class="a t" style="left:850.00px;top:373.50px;font-size:5px;line-height:6.00px;color:#d4d4d4;letter-spacing:1.109px;">線:</div>
<svg class="a" style="left:878.6px;top:372.8px" width="6.8" height="6.8" viewBox="0 0 6.8 6.8"><rect width="6.8" height="6.8" fill="#fff"/><path d="M0.4,6.3999999999999995 L6.3999999999999995,0.4" stroke="#e0202a" stroke-width="1.3"/></svg>
<div class="a" style="left:878.2px;top:372.4px;width:7.6px;height:7.6px;background:transparent;border:0.6px solid #2a2a2a"></div>
<svg class="a" style="left:831px;top:385.0px" width="6" height="3.6" viewBox="0 0 6 3.6"><path d="M.3,1.800 Q3,-.8 5.700,1.800 Q3,4.400 .3,1.800 Z" fill="none" stroke="#bdbdbd" stroke-width=".6"/><circle cx="3" cy="1.800" r=".9" fill="#bdbdbd"/></svg>
<svg class="a" style="left:842px;top:385.0px" width="2.400" height="3.600" viewBox="0 0 2.4 3.6"><path d="M.4,.3 L2,1.800 L.4,3.300" fill="none" stroke="#bdbdbd" stroke-width=".6"/></svg>
<div class="a t" style="left:850.00px;top:383.90px;font-size:5px;line-height:6.00px;color:#d4d4d4;letter-spacing:0.555px;">塗り:</div>
<div class="a" style="left:878.6px;top:383.2px;width:6.8px;height:6.8px;background:#fafafa;"></div>
<svg class="a" style="left:831px;top:395.0px" width="6" height="3.6" viewBox="0 0 6 3.6"><path d="M.3,1.800 Q3,-.8 5.700,1.800 Q3,4.400 .3,1.800 Z" fill="none" stroke="#707070" stroke-width=".6"/><circle cx="3" cy="1.800" r=".9" fill="#707070"/></svg>
<div class="a t" style="left:850.00px;top:393.90px;font-size:5px;line-height:6.00px;color:#e2e2e2;letter-spacing:0.027px;text-decoration:underline;text-decoration-color:#aaa;text-underline-offset:1px">不透明度:</div>
<div class="a t" style="left:884.00px;top:393.90px;font-size:5px;line-height:6.00px;color:#d0d0d0;letter-spacing:-0.005px;">初期設定</div>
<div class="a" style="left:828px;top:371.2px;width:107.3px;height:0.4px;background:#4b4b4b;"></div>
<div class="a" style="left:828px;top:381.6px;width:107.3px;height:0.4px;background:#4b4b4b;"></div>
<div class="a" style="left:828px;top:392px;width:107.3px;height:0.4px;background:#4b4b4b;"></div>
<div class="a" style="left:828px;top:402.2px;width:107.3px;height:0.4px;background:#4b4b4b;"></div>
<div class="a" style="left:827px;top:589.8px;width:109.3px;height:0.6px;background:#444;"></div>
<svg class="a" style="left:831.200px;top:592.6px" width="6" height="6" viewBox="0 0 6 6"><rect x=".5" y=".5" width="5" height="5" fill="none" stroke="#e4e4e4" stroke-width="1"/></svg>
<svg class="a" style="left:842.200px;top:592.6px" width="6" height="6" viewBox="0 0 6 6"><rect x=".4" y=".4" width="5.200" height="5.200" fill="none" stroke="#d0d0d0" stroke-width=".6"/><rect x="1.400" y="1.400" width="3.200" height="3.200" fill="#d0d0d0"/></svg>
<div class="a t" style="left:853.00px;top:592.36px;font-size:5.4px;line-height:6.48px;color:#d0d0d0;font-style:italic;">fx.</div>
<svg class="a" style="left:897.200px;top:592.8px" width="5.600" height="5.600" viewBox="0 0 5.6 5.6"><circle cx="2.800" cy="2.800" r="2.300" fill="none" stroke="#c8c8c8" stroke-width=".7"/><path d="M1.200,4.400 L4.400,1.200" stroke="#c8c8c8" stroke-width=".7"/></svg>
<div class="a" style="left:908.5px;top:593px;width:5.4px;height:5.4px;background:#5e5e5e;"></div>
<div class="a" style="left:919.5px;top:593px;width:5.4px;height:5.4px;background:#5e5e5e;"></div>
<div class="a" style="left:937.5px;top:45px;width:111.5px;height:9.5px;background:#444444;"></div>
<div class="a" style="left:937.5px;top:44.4px;width:111.5px;height:0.7px;background:#3f3f3f;"></div>
<div class="a" style="left:937.5px;top:45px;width:24px;height:9.8px;background:#535353;"></div>
<div class="a t" style="left:943.00px;top:47.01px;font-size:4.9px;line-height:5.88px;color:#f0f0f0;font-weight:bold;letter-spacing:0.156px;">カラー</div>
<div class="a t" style="left:965.00px;top:47.01px;font-size:4.9px;line-height:5.88px;color:#9a9a9a;letter-spacing:-0.472px;">カラーガイド</div>
<svg class="a" style="left:1042.5px;top:48.15px" width="4.4" height="3.6" viewBox="0 0 4.4 3.6"><path d="M.2,.5H4.2M.2,1.800H4.200M.2,3.100H4.200" stroke="#9a9a9a" stroke-width=".55"/></svg>
<svg class="a" style="left:939.600px;top:57.4px" width="5" height="5" viewBox="0 0 5 5"><rect x=".3" y=".3" width="2.800" height="2.800" fill="#ddd"/><rect x="1.900" y="1.900" width="2.800" height="2.800" fill="none" stroke="#ddd" stroke-width=".6"/></svg>
<svg class="a" style="left:948.6px;top:57.4px" width="5" height="5" viewBox="0 0 5 5"><path d="M.6,1.400 Q3.600,.6 4,4.200 M.6,1.400 L2,.2 M.6,1.400 L2,2.600" fill="none" stroke="#ddd" stroke-width=".7"/></svg>
<div class="a" style="left:939.8px;top:65.6px;width:7.5px;height:7.5px;background:#fff;border:0.5px solid #999"></div>
<svg class="a" style="left:944.3px;top:70.1px" width="8.0" height="8.0" viewBox="0 0 8 8"><rect x=".5" y=".5" width="7" height="7" fill="#fff"/><path d="M1,7 L7,1" stroke="#e0202a" stroke-width="1.4"/><rect x="2.6" y="2.6" width="2.8" height="2.8" fill="#4a4a4a"/><path d="M2.6,5.4 L5.4,2.6" stroke="#e0202a" stroke-width="1"/></svg>
<div class="a t" style="left:958.50px;top:60.28px;font-size:5.2px;line-height:6.24px;color:#9b9b9b;">H</div>
<div class="a" style="left:1017px;top:59.5px;width:14px;height:7.8px;background:#4a4a4a;border-radius:0.8px"></div>
<div class="a t" style="left:1033.50px;top:60.40px;font-size:5px;line-height:6.00px;color:#9b9b9b;">°</div>
<div class="a t" style="left:958.50px;top:74.08px;font-size:5.2px;line-height:6.24px;color:#9b9b9b;">S</div>
<div class="a" style="left:1017px;top:73.3px;width:14px;height:7.8px;background:#4a4a4a;border-radius:0.8px"></div>
<div class="a t" style="left:1033.50px;top:74.20px;font-size:5px;line-height:6.00px;color:#9b9b9b;">%</div>
<div class="a t" style="left:958.50px;top:87.88px;font-size:5.2px;line-height:6.24px;color:#9b9b9b;">B</div>
<div class="a" style="left:1017px;top:87.1px;width:14px;height:7.8px;background:#4a4a4a;border-radius:0.8px"></div>
<div class="a t" style="left:1033.50px;top:88.00px;font-size:5px;line-height:6.00px;color:#9b9b9b;">%</div>
<svg class="a" style="left:941.5px;top:93.800px" width="5" height="5" viewBox="0 0 5 5"><path d="M.6,1.400 Q3.600,.6 4,4.200 M.6,1.400 L2,.2 M.6,1.400 L2,2.600" fill="none" stroke="#ccc" stroke-width=".6"/></svg>
<div class="a" style="left:949.4px;top:93px;width:6.4px;height:6.6px;background:#fcfcfc;"></div>
<svg class="a" style="left:939.6px;top:102.2px" width="5.8" height="6.6" viewBox="0 0 5.8 6.6"><rect width="5.8" height="6.6" fill="#fff"/><path d="M0.4,6.199999999999999 L5.3999999999999995,0.4" stroke="#e0202a" stroke-width="1.3"/></svg>
<div class="a" style="left:939.6px;top:102.2px;width:5.8px;height:6.6px;background:transparent;border-radius:50%;border:0.6px solid #ddd"></div>
<div class="a" style="left:945.6px;top:102.2px;width:5.4px;height:6.6px;background:#000;"></div>
<div class="a" style="left:951.2px;top:102.2px;width:5.4px;height:6.6px;background:#fdfdfd;"></div>
<div class="a t" style="left:1006.50px;top:103.00px;font-size:5px;line-height:6.00px;color:#c0c0c0;font-style:italic;">#</div>
<div class="a" style="left:1014px;top:102.60000000000001px;width:28.5px;height:7.6px;background:#4a4a4a;border-radius:0.8px"></div>
<div class="a" style="left:939.6px;top:112.4px;width:103px;height:13px;background:linear-gradient(180deg,rgba(255,255,255,.95) 0%,rgba(255,255,255,0) 45%,rgba(0,0,0,0) 55%,rgba(0,0,0,.95) 100%),linear-gradient(90deg,#f00 0%,#ff0 17%,#0f0 33%,#0ff 50%,#00f 67%,#f0f 83%,#f00 100%);border:0.5px solid #2c2c2c"></div>
<div class="a" style="left:937.5px;top:129.2px;width:111.5px;height:9.8px;background:#444444;"></div>
<div class="a" style="left:937.5px;top:128.6px;width:111.5px;height:0.7px;background:#3f3f3f;"></div>
<div class="a" style="left:937.5px;top:129.2px;width:30px;height:10.100000000000001px;background:#535353;"></div>
<div class="a t" style="left:941.00px;top:131.36px;font-size:4.9px;line-height:5.88px;color:#f0f0f0;font-weight:bold;letter-spacing:0.133px;">スウォッチ</div>
<div class="a t" style="left:972.00px;top:131.36px;font-size:4.9px;line-height:5.88px;color:#9a9a9a;letter-spacing:-0.289px;">ブラシ</div>
<div class="a t" style="left:993.00px;top:131.36px;font-size:4.9px;line-height:5.88px;color:#9a9a9a;letter-spacing:-0.359px;">シンボル</div>
<svg class="a" style="left:1042.5px;top:132.5px" width="4.4" height="3.6" viewBox="0 0 4.4 3.6"><path d="M.2,.5H4.2M.2,1.800H4.200M.2,3.100H4.200" stroke="#9a9a9a" stroke-width=".55"/></svg>
<div class="a" style="left:939.8px;top:143.2px;width:7.5px;height:7.5px;background:#fff;border:0.5px solid #999"></div>
<svg class="a" style="left:944.3px;top:147.7px" width="8.0" height="8.0" viewBox="0 0 8 8"><rect x=".5" y=".5" width="7" height="7" fill="#fff"/><path d="M1,7 L7,1" stroke="#e0202a" stroke-width="1.4"/><rect x="2.6" y="2.6" width="2.8" height="2.8" fill="#4a4a4a"/><path d="M2.6,5.4 L5.4,2.6" stroke="#e0202a" stroke-width="1"/></svg>
<svg class="a" style="left:1029px;top:144.800px" width="6.400" height="6.400" viewBox="0 0 6.4 6.4"><rect x=".3" y=".3" width="5.800" height="5.800" fill="#777"/><path d="M.3,2.200H6.100M.3,4.200H6.100" stroke="#555" stroke-width=".5"/></svg>
<svg class="a" style="left:1039px;top:144.400px" width="7" height="7" viewBox="0 0 7 7"><rect x=".3" y=".3" width="6.400" height="6.400" fill="#f4f4f4"/><path d="M2.400,.3V6.700M4.600,.3V6.700M.3,2.400H6.700M.3,4.600H6.700" stroke="#444" stroke-width=".5"/></svg>
<svg class="a" style="left:940.0px;top:157.6px" width="5.83" height="5.83" viewBox="0 0 5.83 5.83"><rect width="5.83" height="5.83" fill="#fff"/><path d="M0.4,5.43 L5.43,0.4" stroke="#e0202a" stroke-width="1.3"/></svg>
<svg class="a" style="left:945.83px;top:157.6px" width="5.83" height="5.83" viewBox="0 0 6 6"><rect width="6" height="6" fill="#fff"/><circle cx="3" cy="3" r="1.400" fill="none" stroke="#333" stroke-width=".5"/><path d="M3,.6V5.400M.6,3H5.400" stroke="#333" stroke-width=".5"/></svg>
<div class="a" style="left:951.66px;top:157.6px;width:5.88px;height:5.83px;background:#ffffff;"></div>
<div class="a" style="left:957.49px;top:157.6px;width:5.88px;height:5.83px;background:#000000;"></div>
<div class="a" style="left:963.32px;top:157.6px;width:5.88px;height:5.83px;background:#ed1c24;"></div>
<div class="a" style="left:969.15px;top:157.6px;width:5.88px;height:5.83px;background:#fff200;"></div>
<div class="a" style="left:974.98px;top:157.6px;width:5.88px;height:5.83px;background:#1fd81f;"></div>
<div class="a" style="left:980.81px;top:157.6px;width:5.88px;height:5.83px;background:#00c8f0;"></div>
<div class="a" style="left:986.64px;top:157.6px;width:5.88px;height:5.83px;background:#0a0aff;"></div>
<div class="a" style="left:992.47px;top:157.6px;width:5.88px;height:5.83px;background:#f300f3;"></div>
<div class="a" style="left:998.3px;top:157.6px;width:5.88px;height:5.83px;background:#e0202e;"></div>
<div class="a" style="left:1004.13px;top:157.6px;width:5.88px;height:5.83px;background:#ee2424;"></div>
<div class="a" style="left:1009.96px;top:157.6px;width:5.88px;height:5.83px;background:#f26522;"></div>
<div class="a" style="left:1015.79px;top:157.6px;width:5.88px;height:5.83px;background:#f7941d;"></div>
<div class="a" style="left:1021.62px;top:157.6px;width:5.88px;height:5.83px;background:#fbb03b;"></div>
<div class="a" style="left:1027.45px;top:157.6px;width:5.88px;height:5.83px;background:#f2e218;"></div>
<div class="a" style="left:1033.28px;top:157.6px;width:5.88px;height:5.83px;background:#d9e021;"></div>
<div class="a" style="left:940.0px;top:163.5px;width:5.88px;height:5.83px;background:#8cc63f;"></div>
<div class="a" style="left:945.83px;top:163.5px;width:5.88px;height:5.83px;background:#39b54a;"></div>
<div class="a" style="left:951.66px;top:163.5px;width:5.88px;height:5.83px;background:#009245;"></div>
<div class="a" style="left:957.49px;top:163.5px;width:5.88px;height:5.83px;background:#006837;"></div>
<div class="a" style="left:963.32px;top:163.5px;width:5.88px;height:5.83px;background:#22b573;"></div>
<div class="a" style="left:969.15px;top:163.5px;width:5.88px;height:5.83px;background:#00a99d;"></div>
<div class="a" style="left:974.98px;top:163.5px;width:5.88px;height:5.83px;background:#29abe2;"></div>
<div class="a" style="left:980.81px;top:163.5px;width:5.88px;height:5.83px;background:#0071bc;"></div>
<div class="a" style="left:986.64px;top:163.5px;width:5.88px;height:5.83px;background:#2e3192;"></div>
<div class="a" style="left:992.47px;top:163.5px;width:5.88px;height:5.83px;background:#1b1464;"></div>
<div class="a" style="left:998.3px;top:163.5px;width:5.88px;height:5.83px;background:#662d91;"></div>
<div class="a" style="left:1004.13px;top:163.5px;width:5.88px;height:5.83px;background:#93278f;"></div>
<div class="a" style="left:1009.96px;top:163.5px;width:5.88px;height:5.83px;background:#9e005d;"></div>
<div class="a" style="left:1015.79px;top:163.5px;width:5.88px;height:5.83px;background:#d4145a;"></div>
<div class="a" style="left:1021.62px;top:163.5px;width:5.88px;height:5.83px;background:#ed1e79;"></div>
<div class="a" style="left:1027.45px;top:163.5px;width:5.88px;height:5.83px;background:#c7b299;"></div>
<div class="a" style="left:1033.28px;top:163.5px;width:5.88px;height:5.83px;background:#998675;"></div>
<div class="a" style="left:940.0px;top:169.4px;width:5.88px;height:5.83px;background:#736357;"></div>
<div class="a" style="left:945.83px;top:169.4px;width:5.88px;height:5.83px;background:#534741;"></div>
<div class="a" style="left:951.66px;top:169.4px;width:5.88px;height:5.83px;background:#c69c6d;"></div>
<div class="a" style="left:957.49px;top:169.4px;width:5.88px;height:5.83px;background:#a67c52;"></div>
<div class="a" style="left:963.32px;top:169.4px;width:5.88px;height:5.83px;background:#8c6239;"></div>
<div class="a" style="left:969.15px;top:169.4px;width:5.88px;height:5.83px;background:#754c24;"></div>
<div class="a" style="left:974.98px;top:169.4px;width:5.88px;height:5.83px;background:#603813;"></div>
<div class="a" style="left:980.81px;top:169.4px;width:5.88px;height:5.83px;background:#42210b;"></div>
<div class="a" style="left:986.64px;top:169.4px;width:5.88px;height:5.83px;background:linear-gradient(90deg,#fff,#222);"></div>
<div class="a" style="left:992.47px;top:169.4px;width:5.88px;height:5.83px;background:linear-gradient(90deg,#e8f8ff,#29abe2);"></div>
<div class="a" style="left:998.3px;top:169.4px;width:5.88px;height:5.83px;background:linear-gradient(90deg,#fff,#f5a0c0);"></div>
<div class="a" style="left:1004.13px;top:169.4px;width:5.88px;height:5.83px;background:linear-gradient(90deg,#fbd9a0,#f7931e);"></div>
<div class="a" style="left:1009.96px;top:169.4px;width:5.88px;height:5.83px;background:linear-gradient(90deg,#fff,#f3ead8);"></div>
<div class="a" style="left:1015.79px;top:169.4px;width:5.88px;height:5.83px;background:linear-gradient(90deg,#7fc4f0,#1560b0);"></div>
<div class="a" style="left:1021.62px;top:169.4px;width:5.88px;height:5.83px;background:linear-gradient(90deg,#dfe8d0,#a8c0a0);"></div>
<div class="a" style="left:1027.45px;top:169.4px;width:5.88px;height:5.83px;background:linear-gradient(90deg,#ffd6e0,#f0a0b8);"></div>
<svg class="a" style="left:1033.28px;top:169.4px" width="5.83" height="5.83" viewBox="0 0 6 6"><rect width="6" height="6" fill="#e8391e"/><path d="M6,2.400 V6 H2.400 Z" fill="#fff"/></svg>
<div class="a" style="left:940.0px;top:175.5px;width:5.88px;height:5.83px;background:linear-gradient(90deg,#1b1fae,#2a2a8a,#fff);"></div>
<div class="a" style="left:945.83px;top:175.5px;width:5.88px;height:5.83px;background:#f4fbff;"></div>
<div class="a" style="left:951.66px;top:175.5px;width:5.88px;height:5.83px;background:#b8ecf4;"></div>
<svg class="a" style="left:957.49px;top:175.5px" width="5.83" height="5.83" viewBox="0 0 6 6"><rect width="6" height="6" fill="#e8391e"/><path d="M6,2.400 V6 H2.400 Z" fill="#fff"/></svg>
<svg class="a" style="left:940.0px;top:181.8px" width="5.83" height="5.83" viewBox="0 0 6 6"><path d="M.6,1.600 H2.600 L3.200,2.200 H5.400 V4.800 H.6 Z" fill="#d8d8d8"/></svg>
<div class="a" style="left:945.83px;top:181.8px;width:5.88px;height:5.83px;background:#000000;"></div>
<div class="a" style="left:951.66px;top:181.8px;width:5.88px;height:5.83px;background:#1a1a1a;"></div>
<div class="a" style="left:957.49px;top:181.8px;width:5.88px;height:5.83px;background:#333333;"></div>
<div class="a" style="left:963.32px;top:181.8px;width:5.88px;height:5.83px;background:#4d4d4d;"></div>
<div class="a" style="left:969.15px;top:181.8px;width:5.88px;height:5.83px;background:#666666;"></div>
<div class="a" style="left:974.98px;top:181.8px;width:5.88px;height:5.83px;background:#808080;"></div>
<div class="a" style="left:980.81px;top:181.8px;width:5.88px;height:5.83px;background:#999999;"></div>
<div class="a" style="left:986.64px;top:181.8px;width:5.88px;height:5.83px;background:#b3b3b3;"></div>
<div class="a" style="left:992.47px;top:181.8px;width:5.88px;height:5.83px;background:#cccccc;"></div>
<div class="a" style="left:998.3px;top:181.8px;width:5.88px;height:5.83px;background:#e6e6e6;"></div>
<div class="a" style="left:1004.13px;top:181.8px;width:5.88px;height:5.83px;background:#f7f7f7;"></div>
<svg class="a" style="left:940.0px;top:188.3px" width="5.83" height="5.83" viewBox="0 0 6 6"><path d="M.6,1.600 H2.600 L3.200,2.200 H5.400 V4.800 H.6 Z" fill="#d8d8d8"/></svg>
<div class="a" style="left:945.83px;top:188.3px;width:5.88px;height:5.83px;background:#3fa9f5;"></div>
<div class="a" style="left:951.66px;top:188.3px;width:5.88px;height:5.83px;background:#7ac943;"></div>
<div class="a" style="left:957.49px;top:188.3px;width:5.88px;height:5.83px;background:#ff931e;"></div>
<div class="a" style="left:963.32px;top:188.3px;width:5.88px;height:5.83px;background:#ff1d25;"></div>
<div class="a" style="left:969.15px;top:188.3px;width:5.88px;height:5.83px;background:#ff7bac;"></div>
<div class="a" style="left:974.98px;top:188.3px;width:5.88px;height:5.83px;background:#d4d4dc;"></div>
<svg class="a" style="left:940px;top:242.4px" width="6.400" height="6" viewBox="0 0 6.4 6"><path d="M.4,.4V5.600 M1.600,.4V5.600 M3,.6 L4.600,5.600 M5.400,5.600 H6.200" stroke="#cfcfcf" stroke-width=".7"/></svg>
<svg class="a" style="left:951.8px;top:242.400px" width="6.800" height="6" viewBox="0 0 6.8 6"><path d="M.6,4 A2.600,2.600 0 0 1 5.400,2.400 M5.400,2.400 L6.400,.8 M5.400,2.400 L3.800,2" fill="none" stroke="#cfcfcf" stroke-width=".7"/><rect x="2.400" y="3.400" width="2.600" height="2.400" fill="#cfcfcf"/></svg>
<svg class="a" style="left:989px;top:242.400px" width="6.400" height="6" viewBox="0 0 6.4 6"><rect x=".4" y=".4" width="2.400" height="2.400" fill="#cfcfcf"/><rect x="3.400" y=".4" width="2.400" height="2.400" fill="#cfcfcf"/><rect x=".4" y="3.400" width="2.400" height="2.400" fill="#cfcfcf"/><path d="M5.600,5.600 h.8" stroke="#cfcfcf" stroke-width=".8"/></svg>
<div class="a" style="left:1000.4px;top:243px;width:5.2px;height:5.2px;background:#686868;opacity:.7"></div>
<svg class="a" style="left:1010.6px;top:242.800px" width="6.800" height="5.400" viewBox="0 0 6.8 5.4"><path d="M.4,1 H2.600 L3.200,1.800 H6.400 V5 H.4 Z" fill="#e8e8e8"/></svg>
<div class="a" style="left:1023.4px;top:243px;width:5.2px;height:5.2px;background:#686868;opacity:.7"></div>
<div class="a" style="left:1033.4px;top:243px;width:5.2px;height:5.2px;background:#686868;opacity:.7"></div>
<div class="a" style="left:937.5px;top:250.2px;width:111.5px;height:11.4px;background:#444444;"></div>
<div class="a" style="left:937.5px;top:249.6px;width:111.5px;height:0.7px;background:#383838;"></div>
<div class="a" style="left:937.5px;top:250.2px;width:18px;height:11.7px;background:#535353;"></div>
<svg class="a" style="left:939.400px;top:254.400px" width="2.800" height="3.600" viewBox="0 0 2.8 3.6"><path d="M.3,1.400 L1.400,.3 L2.500,1.400 M.3,2.200 L1.400,3.300 L2.500,2.200" fill="none" stroke="#8a8a8a" stroke-width=".5"/></svg>
<div class="a t" style="left:944.50px;top:253.00px;font-size:5px;line-height:6.00px;color:#f0f0f0;font-weight:bold;">線</div>
<div class="a t" style="left:960.00px;top:253.06px;font-size:4.9px;line-height:5.88px;color:#9a9a9a;letter-spacing:-0.273px;">グラデーション</div>
<div class="a t" style="left:1000.00px;top:253.06px;font-size:4.9px;line-height:5.88px;color:#9a9a9a;">透明</div>
<svg class="a" style="left:1043.600px;top:254.400px" width="4.400" height="3.600" viewBox="0 0 4.4 3.6"><path d="M.2,.5H4.200M.2,1.800H4.200M.2,3.100H4.200" stroke="#9a9a9a" stroke-width=".55"/></svg>
<div class="a t" style="left:960.00px;top:266.20px;font-size:5px;line-height:6.00px;color:#d8d8d8;font-weight:bold;letter-spacing:-0.586px;">線幅:</div>
<svg class="a" style="left:975.9px;top:266.0px" width="3.2" height="6.4" viewBox="0 0 3.2 6.4"><path d="M0.3,2.4 L1.6,0.8 L2.9,2.4 M0.3,4 L1.6,5.6 L2.9,4" fill="none" stroke="#cfcfcf" stroke-width="0.8"/></svg>
<div class="a" style="left:981.5px;top:265.3px;width:27px;height:7.8px;background:#494949;border-radius:0.8px"></div>
<svg class="a" style="left:1010.5px;top:268.3px" width="4.0" height="2.4" viewBox="0 0 4 2.4"><path d="M0.3,0.3 L2,2 L3.7,0.3" fill="none" stroke="#cfcfcf" stroke-width="0.8"/></svg>
<div class="a t" style="left:960.00px;top:277.26px;font-size:4.9px;line-height:5.88px;color:#767676;letter-spacing:-0.57px;">線端:</div>
<div class="a t" style="left:950.00px;top:288.46px;font-size:4.9px;line-height:5.88px;color:#767676;letter-spacing:-0.355px;">角の形状:</div>
<div class="a t" style="left:950.00px;top:299.46px;font-size:4.9px;line-height:5.88px;color:#767676;letter-spacing:-0.355px;">線の位置:</div>
<div class="a" style="left:975.5px;top:277.2px;width:6px;height:6px;background:transparent;border:0.7px solid #727272;border-radius:1px"></div>
<div class="a" style="left:985px;top:277.2px;width:6px;height:6px;background:transparent;border:0.7px solid #727272;border-radius:1px"></div>
<div class="a" style="left:994.5px;top:277.2px;width:6px;height:6px;background:transparent;border:0.7px solid #727272;border-radius:1px"></div>
<div class="a" style="left:975.5px;top:288.4px;width:6px;height:6px;background:transparent;border:0.7px solid #727272;border-radius:1px"></div>
<div class="a" style="left:985px;top:288.4px;width:6px;height:6px;background:transparent;border:0.7px solid #727272;border-radius:1px"></div>
<div class="a" style="left:994.5px;top:288.4px;width:6px;height:6px;background:transparent;border:0.7px solid #727272;border-radius:1px"></div>
<div class="a" style="left:975.5px;top:299.4px;width:6px;height:6px;background:transparent;border:0.7px solid #727272;border-radius:1px"></div>
<div class="a" style="left:985px;top:299.4px;width:6px;height:6px;background:transparent;border:0.7px solid #727272;border-radius:1px"></div>
<div class="a" style="left:994.5px;top:299.4px;width:6px;height:6px;background:transparent;border:0.7px solid #727272;border-radius:1px"></div>
<div class="a t" style="left:1009.00px;top:288.46px;font-size:4.9px;line-height:5.88px;color:#767676;letter-spacing:-0.82px;">比率:</div>
<div class="a" style="left:1021.5px;top:287.59999999999997px;width:22px;height:7.6px;background:#4e4e4e;border-radius:0.8px"></div>
<div class="a" style="left:938.8px;top:313px;width:6.2px;height:6.2px;background:#505050;border:0.8px solid #eaeaea;border-radius:1px"></div>
<div class="a t" style="left:947.50px;top:313.20px;font-size:5px;line-height:6.00px;color:#f0f0f0;font-weight:bold;">破線</div>
<svg class="a" style="left:1019px;top:312.600px" width="12" height="7" viewBox="0 0 12 7"><path d="M.5,1.500 H11.500 M.5,5 H11.500" stroke="#6c6c6c" stroke-width=".6" stroke-dasharray="1.600 1"/></svg>
<svg class="a" style="left:1033px;top:312.600px" width="12" height="7" viewBox="0 0 12 7"><path d="M.5,1.500 H11.500 M.5,5 H11.500" stroke="#6c6c6c" stroke-width=".6" stroke-dasharray="1.600 1"/></svg>
<div class="a" style="left:940.5px;top:324.79999999999995px;width:15px;height:7.2px;background:#505050;border-radius:0.8px"></div>
<div class="a t" style="left:943.00px;top:333.44px;font-size:4.6px;line-height:5.52px;color:#737373;letter-spacing:-0.703px;">線分</div>
<div class="a" style="left:958.7px;top:324.79999999999995px;width:15px;height:7.2px;background:#505050;border-radius:0.8px"></div>
<div class="a t" style="left:961.20px;top:333.44px;font-size:4.6px;line-height:5.52px;color:#737373;letter-spacing:-0.703px;">間隔</div>
<div class="a" style="left:976.9px;top:324.79999999999995px;width:15px;height:7.2px;background:#505050;border-radius:0.8px"></div>
<div class="a t" style="left:979.40px;top:333.44px;font-size:4.6px;line-height:5.52px;color:#737373;letter-spacing:-0.703px;">線分</div>
<div class="a" style="left:995.1px;top:324.79999999999995px;width:15px;height:7.2px;background:#505050;border-radius:0.8px"></div>
<div class="a t" style="left:997.60px;top:333.44px;font-size:4.6px;line-height:5.52px;color:#737373;letter-spacing:-0.703px;">間隔</div>
<div class="a" style="left:1013.3px;top:324.79999999999995px;width:15px;height:7.2px;background:#505050;border-radius:0.8px"></div>
<div class="a t" style="left:1015.80px;top:333.44px;font-size:4.6px;line-height:5.52px;color:#737373;letter-spacing:-0.703px;">線分</div>
<div class="a" style="left:1031.5px;top:324.79999999999995px;width:15px;height:7.2px;background:#505050;border-radius:0.8px"></div>
<div class="a t" style="left:1034.00px;top:333.44px;font-size:4.6px;line-height:5.52px;color:#737373;letter-spacing:-0.703px;">間隔</div>
<div class="a t" style="left:960.00px;top:345.46px;font-size:4.9px;line-height:5.88px;color:#767676;letter-spacing:-0.57px;">矢印:</div>
<div class="a" style="left:973.8px;top:344px;width:20px;height:8.6px;background:#8b8b8b;"></div>
<div class="a" style="left:1005.8px;top:344px;width:20px;height:8.6px;background:#8b8b8b;"></div>
<svg class="a" style="left:1040px;top:346px" width="5.600" height="4.400" viewBox="0 0 5.6 4.4"><path d="M.4,1.200 H5.200 L4,.2 M5.200,3.200 H.4 L1.600,4.200" fill="none" stroke="#727272" stroke-width=".6"/></svg>
<div class="a t" style="left:960.00px;top:358.86px;font-size:4.9px;line-height:5.88px;color:#767676;letter-spacing:-0.57px;">倍率:</div>
<div class="a" style="left:974px;top:358.1px;width:26px;height:7.4px;background:#505050;border-radius:0.8px"></div>
<div class="a" style="left:1006px;top:358.1px;width:26px;height:7.4px;background:#505050;border-radius:0.8px"></div>
<div class="a t" style="left:951.00px;top:370.26px;font-size:4.9px;line-height:5.88px;color:#767676;letter-spacing:-0.48px;">先端位置:</div>
<div class="a" style="left:974.4px;top:370.6px;width:5.6px;height:5px;background:transparent;border:0.6px solid #6e6e6e"></div>
<div class="a" style="left:983.4px;top:370.6px;width:5.6px;height:5px;background:transparent;border:0.6px solid #6e6e6e"></div>
<div class="a t" style="left:941.50px;top:384.66px;font-size:4.9px;line-height:5.88px;color:#767676;letter-spacing:-0.367px;">プロファイル:</div>
<div class="a" style="left:973.8px;top:383px;width:42.5px;height:9px;background:#8b8b8b;"></div>
<div class="a" style="left:1019.6px;top:385px;width:4.8px;height:5px;background:transparent;border:0.6px solid #6a6a6a"></div>
<div class="a" style="left:1030.6px;top:385px;width:4.8px;height:5px;background:transparent;border:0.6px solid #6a6a6a"></div>
<div class="a" style="left:1040.6px;top:385px;width:4.8px;height:5px;background:transparent;border:0.6px solid #6a6a6a"></div>
<div class="a" style="left:937.5px;top:396.2px;width:111.5px;height:11.4px;background:#444444;"></div>
<div class="a" style="left:937.5px;top:395.59999999999997px;width:111.5px;height:0.7px;background:#3f3f3f;"></div>
<div class="a" style="left:937.5px;top:396.2px;width:27.5px;height:11.700000000000001px;background:#535353;"></div>
<div class="a t" style="left:941.50px;top:399.16px;font-size:4.9px;line-height:5.88px;color:#f0f0f0;font-weight:bold;letter-spacing:0.526px;">レイヤー</div>
<div class="a t" style="left:967.00px;top:399.16px;font-size:4.9px;line-height:5.88px;color:#9a9a9a;letter-spacing:-0.99px;">アセットの書き出し</div>
<div class="a t" style="left:1006.00px;top:399.16px;font-size:4.9px;line-height:5.88px;color:#9a9a9a;letter-spacing:-0.512px;">アートボード</div>
<svg class="a" style="left:1042.5px;top:400.29999999999995px" width="4.4" height="3.6" viewBox="0 0 4.4 3.6"><path d="M.2,.5H4.2M.2,1.800H4.200M.2,3.100H4.200" stroke="#9a9a9a" stroke-width=".55"/></svg>
<div class="a" style="left:943px;top:411.2px;width:92px;height:11px;background:#474747;border-radius:1px"></div>
<svg class="a" style="left:944.400px;top:413.800px" width="6" height="6" viewBox="0 0 6 6"><circle cx="2.400" cy="2.400" r="1.800" fill="none" stroke="#d0d0d0" stroke-width=".8"/><path d="M3.700,3.700 L5.600,5.600" stroke="#d0d0d0" stroke-width=".9"/></svg>
<div class="a t" style="left:955.00px;top:413.74px;font-size:5.1px;line-height:6.12px;color:#c4c4c4;font-weight:bold;letter-spacing:0.019px;">すべてを検索</div>
<svg class="a" style="left:1039px;top:413.200px" width="6.600" height="7.600" viewBox="0 0 6.6 7.6"><path d="M.3,.4 H6.300 L4,3.400 V7 L2.600,6 V3.400 Z" fill="#e8e8e8"/></svg>
<div class="a" style="left:937.5px;top:425.0px;width:111.5px;height:9.2px;background:#4b6a8e;"></div>
<svg class="a" style="left:940.5px;top:427.8px" width="6" height="3.6" viewBox="0 0 6 3.6"><path d="M.3,1.800 Q3,-.8 5.700,1.800 Q3,4.400 .3,1.800 Z" fill="none" stroke="#d0d0d0" stroke-width=".6"/><circle cx="3" cy="1.800" r=".9" fill="#d0d0d0"/></svg>
<div class="a" style="left:957px;top:425.20000000000005px;width:3px;height:8.8px;background:#4a60e0;"></div>
<svg class="a" style="left:962.5px;top:427.8px" width="2.400" height="3.600" viewBox="0 0 2.4 3.6"><path d="M.4,.3 L2,1.800 L.4,3.300" fill="none" stroke="#d0d0d0" stroke-width=".6"/></svg>
<div class="a" style="left:970px;top:425.6px;width:7.5px;height:8px;background:#fff;border:0.5px solid #3a3a3a"></div>
<div class="a" style="left:972.5px;top:428.1px;width:2.5px;height:1.2px;background:#f4b0a8;"></div>
<div class="a t" style="left:980.50px;top:426.64px;font-size:5.1px;line-height:6.12px;color:#f2f2f2;font-weight:bold;letter-spacing:-0.297px;">レイヤー 4</div>
<svg class="a" style="left:1033.6px;top:427.20000000000005px" width="4.800" height="4.800" viewBox="0 0 4.8 4.800"><circle cx="2.400" cy="2.400" r="1.900" fill="none" stroke="#8ea2bd" stroke-width=".6"/></svg>
<div class="a" style="left:1040.5px;top:427.40000000000003px;width:4.4px;height:4.4px;background:#2f45c8;"></div>
<svg class="a" style="left:1045px;top:424.40000000000003px" width="3" height="3" viewBox="0 0 3 3"><path d="M0,0 H3 V3 Z" fill="#f0f0f0"/></svg>
<svg class="a" style="left:940.5px;top:436.59999999999997px" width="6" height="3.6" viewBox="0 0 6 3.6"><path d="M.3,1.800 Q3,-.8 5.700,1.800 Q3,4.400 .3,1.800 Z" fill="none" stroke="#d0d0d0" stroke-width=".6"/><circle cx="3" cy="1.800" r=".9" fill="#d0d0d0"/></svg>
<svg class="a" style="left:950.3px;top:435.59999999999997px" width="4.400" height="5.400" viewBox="0 0 4.4 5.4"><rect x=".3" y="2.400" width="3.800" height="2.800" fill="#c4c4c4"/><path d="M1,2.400 V1.600 A1.200,1.200 0 0 1 3.400,1.600 V2.400" fill="none" stroke="#c4c4c4" stroke-width=".6"/></svg>
<div class="a" style="left:957px;top:434.0px;width:3px;height:8.8px;background:#40e050;"></div>
<svg class="a" style="left:962.5px;top:436.59999999999997px" width="2.400" height="3.600" viewBox="0 0 2.4 3.6"><path d="M.4,.3 L2,1.800 L.4,3.300" fill="none" stroke="#d0d0d0" stroke-width=".6"/></svg>
<div class="a" style="left:970px;top:434.4px;width:7.5px;height:8px;background:#fff;border:0.5px solid #3a3a3a"></div>
<div class="a" style="left:972.5px;top:436.9px;width:2.5px;height:1.2px;background:#f4b0a8;"></div>
<div class="a t" style="left:980.50px;top:435.44px;font-size:5.1px;line-height:6.12px;color:#e2e2e2;font-weight:bold;letter-spacing:-0.297px;">レイヤー 3</div>
<svg class="a" style="left:1033.6px;top:436.0px" width="4.800" height="4.800" viewBox="0 0 4.8 4.800"><circle cx="2.400" cy="2.400" r="1.900" fill="none" stroke="#a8a8a8" stroke-width=".6"/></svg>
<svg class="a" style="left:940.5px;top:445.4px" width="6" height="3.6" viewBox="0 0 6 3.6"><path d="M.3,1.800 Q3,-.8 5.700,1.800 Q3,4.400 .3,1.800 Z" fill="none" stroke="#d0d0d0" stroke-width=".6"/><circle cx="3" cy="1.800" r=".9" fill="#d0d0d0"/></svg>
<svg class="a" style="left:950.3px;top:444.4px" width="4.400" height="5.400" viewBox="0 0 4.4 5.4"><rect x=".3" y="2.400" width="3.800" height="2.800" fill="#c4c4c4"/><path d="M1,2.400 V1.600 A1.200,1.200 0 0 1 3.400,1.600 V2.400" fill="none" stroke="#c4c4c4" stroke-width=".6"/></svg>
<div class="a" style="left:957px;top:442.8px;width:3px;height:8.8px;background:#4a60e0;"></div>
<svg class="a" style="left:962.5px;top:445.4px" width="2.400" height="3.600" viewBox="0 0 2.4 3.6"><path d="M.4,.3 L2,1.800 L.4,3.300" fill="none" stroke="#d0d0d0" stroke-width=".6"/></svg>
<div class="a" style="left:970px;top:443.2px;width:7.5px;height:8px;background:#fff;border:0.5px solid #3a3a3a"></div>
<div class="a" style="left:972.5px;top:445.7px;width:2.5px;height:1.2px;background:#f4b0a8;"></div>
<div class="a t" style="left:980.50px;top:444.24px;font-size:5.1px;line-height:6.12px;color:#e2e2e2;font-weight:bold;letter-spacing:-0.297px;">レイヤー 2</div>
<svg class="a" style="left:1033.6px;top:444.8px" width="4.800" height="4.800" viewBox="0 0 4.8 4.800"><circle cx="2.400" cy="2.400" r="1.900" fill="none" stroke="#a8a8a8" stroke-width=".6"/></svg>
<svg class="a" style="left:940.5px;top:454.2px" width="6" height="3.6" viewBox="0 0 6 3.6"><path d="M.3,1.800 Q3,-.8 5.700,1.800 Q3,4.400 .3,1.800 Z" fill="none" stroke="#d0d0d0" stroke-width=".6"/><circle cx="3" cy="1.800" r=".9" fill="#d0d0d0"/></svg>
<svg class="a" style="left:950.3px;top:453.2px" width="4.400" height="5.400" viewBox="0 0 4.4 5.4"><rect x=".3" y="2.400" width="3.800" height="2.800" fill="#c4c4c4"/><path d="M1,2.400 V1.600 A1.200,1.200 0 0 1 3.400,1.600 V2.400" fill="none" stroke="#c4c4c4" stroke-width=".6"/></svg>
<div class="a" style="left:957px;top:451.6px;width:3px;height:8.8px;background:#4a60e0;"></div>
<svg class="a" style="left:962.5px;top:454.2px" width="2.400" height="3.600" viewBox="0 0 2.4 3.6"><path d="M.4,.3 L2,1.800 L.4,3.300" fill="none" stroke="#d0d0d0" stroke-width=".6"/></svg>
<div class="a" style="left:970px;top:452px;width:7.5px;height:8px;background:#ffd0cc;border:0.5px solid #3a3a3a"></div>
<div class="a" style="left:971.5px;top:454.5px;width:4.5px;height:3.5px;background:#f08080;"></div>
<div class="a t" style="left:980.50px;top:453.04px;font-size:5.1px;line-height:6.12px;color:#e2e2e2;font-weight:bold;letter-spacing:-0.297px;">レイヤー 1</div>
<svg class="a" style="left:1033.6px;top:453.6px" width="4.800" height="4.800" viewBox="0 0 4.8 4.800"><circle cx="2.400" cy="2.400" r="1.900" fill="none" stroke="#a8a8a8" stroke-width=".6"/></svg>
<div class="a" style="left:937.5px;top:589.8px;width:111.5px;height:0.6px;background:#444;"></div>
<div class="a t" style="left:938.50px;top:592.70px;font-size:5px;line-height:6.00px;color:#dcdcdc;font-weight:bold;letter-spacing:0.094px;">4 レイヤー</div>
<svg class="a" style="left:968.3000000000001px;top:592.600px" width="6.800" height="6" viewBox="0 0 6.8 6"><rect x=".4" y=".4" width="6" height="5.200" fill="none" stroke="#d4d4d4" stroke-width=".7"/><rect x="3" y="2.600" width="3.400" height="3" fill="#d4d4d4"/></svg>
<svg class="a" style="left:978.6px;top:592.200px" width="6.800" height="6.400" viewBox="0 0 6.8 6.4"><rect x=".4" y="1.800" width="4.400" height="4.200" fill="none" stroke="#d4d4d4" stroke-width=".7"/><path d="M3,3.400 L6.200,.4 M6.400,2.200 V.4 H4.400" fill="none" stroke="#d4d4d4" stroke-width=".7"/></svg>
<svg class="a" style="left:989.5px;top:592.600px" width="6" height="6" viewBox="0 0 6 6"><circle cx="2.400" cy="2.400" r="1.800" fill="none" stroke="#d4d4d4" stroke-width=".8"/><path d="M3.700,3.700 L5.600,5.600" stroke="#d4d4d4" stroke-width=".9"/></svg>
<svg class="a" style="left:1000px;top:592.600px" width="6" height="6" viewBox="0 0 6 6"><rect x=".4" y=".4" width="5.200" height="5.200" rx="1" fill="#d4d4d4"/><circle cx="3" cy="3" r="1.500" fill="#535353"/></svg>
<svg class="a" style="left:1010.6px;top:592.600px" width="6.800" height="6" viewBox="0 0 6.8 6"><path d="M.4,1 H4 M.4,3 H4 M2,1 V5 H6.400 M5,3.600 L6.400,5 L5,6.400" fill="none" stroke="#d4d4d4" stroke-width=".7"/></svg>
<svg class="a" style="left:1023px;top:592.600px" width="6" height="6" viewBox="0 0 6 6"><rect x=".4" y=".4" width="5.200" height="5.200" fill="none" stroke="#d4d4d4" stroke-width=".7"/><path d="M3,1.400V4.600M1.400,3H4.600" stroke="#d4d4d4" stroke-width=".7"/></svg>
<svg class="a" style="left:1033.4px;top:592.400px" width="5.200" height="6.400" viewBox="0 0 5.2 6.4"><path d="M.2,1.400 H5 M1.800,1.400 V.4 H3.400 V1.400 M.8,1.400 L1.200,6 H4 L4.400,1.400" fill="none" stroke="#d4d4d4" stroke-width=".7"/></svg>
<svg class="a" style="left:1055.600px;top:50.600px" width="7" height="7" viewBox="0 0 7 7"><rect x=".4" y=".4" width="6.200" height="6.200" fill="none" stroke="#9c9c9c" stroke-width=".7"/><path d="M.4,2.600H6.600 M.4,4.600H6.600" stroke="#9c9c9c" stroke-width=".6"/></svg>
<svg class="a" style="left:1055.600px;top:62.400px" width="7" height="7" viewBox="0 0 7 7"><rect x=".4" y=".4" width="6.200" height="6.200" fill="none" stroke="#e4e4e4" stroke-width=".8"/><path d="M2.600,4.600 L5,2 M5,4 V2 H3" fill="none" stroke="#e4e4e4" stroke-width=".8"/></svg>
<div class="a" style="left:1053px;top:59.6px;width:12px;height:0.4px;background:#3a3a3a;"></div>
<div class="a" style="left:-8px;top:50.6px;width:25px;height:0.6px;background:#3c3c3c;"></div>
<div class="a" style="left:16.3px;top:50.6px;width:0.9px;height:557.4px;background:#3a2f2d;"></div>
<svg class="a" style="left:4.8px;top:53.3px" width="7.400" height="7.400" viewBox="0 0 7.4 7.4"><path d="M1.600,.6 L1.600,6.200 L3,4.900 L4,7 L4.800,6.600 L3.800,4.600 L5.600,4.400 Z" fill="#4a4a4a" stroke="#d2d2d2" stroke-width=".6"/></svg>
<svg class="a" style="left:4.8px;top:63.3px" width="7.400" height="7.400" viewBox="0 0 7.4 7.4"><path d="M1.400,.4 L1.400,6.400 L3,5 L4,7.200 L5,6.700 L4,4.600 L6,4.400 Z" fill="#d2d2d2"/></svg>
<svg class="a" style="left:4.8px;top:73.3px" width="7.400" height="7.400" viewBox="0 0 7.4 7.4"><path d="M1,6.400 L4.600,2.800" stroke="#d2d2d2" stroke-width="1"/><path d="M5.400,.6 V2.200 M4.600,1.400 H6.200 M6.200,3.200 L6.800,3.800" stroke="#d2d2d2" stroke-width=".6"/></svg>
<svg class="a" style="left:4.8px;top:83.3px" width="7.400" height="7.400" viewBox="0 0 7.4 7.4"><path d="M3.600,.4 L5.800,3.600 L4.400,6.600 H2.800 L1.400,3.600 Z" fill="#d2d2d2"/><circle cx="3.600" cy="3.800" r=".7" fill="#4a4a4a"/><path d="M5.600,5.600 L6.800,6.800" stroke="#d2d2d2" stroke-width=".6"/></svg>
<svg class="a" style="left:4.8px;top:93.3px" width="7.400" height="7.400" viewBox="0 0 7.4 7.4"><path d="M4.600,.6 L6.400,2.400 L3.200,5.600 L1,6.200 L1.600,4 Z" fill="#d2d2d2"/><path d="M.6,6.800 Q2,5 3,6.800" fill="none" stroke="#d2d2d2" stroke-width=".5"/></svg>
<svg class="a" style="left:4.8px;top:103.3px" width="7.400" height="7.400" viewBox="0 0 7.4 7.4"><path d="M4.600,.8 L6.400,2.600 L3.400,5.200 L2,3.800 Z" fill="#d2d2d2"/><circle cx="2" cy="5.400" r="1.500" fill="#d2d2d2"/></svg>
<svg class="a" style="left:4.8px;top:113.3px" width="7.400" height="7.400" viewBox="0 0 7.4 7.4"><path d="M1,1 H6.200 V2.400 H5.600 V1.800 H4.100 V6 H4.900 V6.600 H2.300 V6 H3.100 V1.800 H1.600 V2.400 H1 Z" fill="#d2d2d2"/></svg>
<svg class="a" style="left:4.8px;top:123.3px" width="7.400" height="7.400" viewBox="0 0 7.4 7.4"><path d="M1,6.600 L6.200,.8" stroke="#d2d2d2" stroke-width=".8"/></svg>
<svg class="a" style="left:4.8px;top:133.3px" width="7.400" height="7.400" viewBox="0 0 7.4 7.4"><path d="M3.600,.8 L6.200,2.200 V5.200 L3.600,6.600 L1,5.200 V2.200 Z" fill="none" stroke="#8a8a8a" stroke-width=".8"/></svg>
<svg class="a" style="left:4.8px;top:143.3px" width="7.400" height="7.400" viewBox="0 0 7.4 7.4"><path d="M6.400,.6 L3,4.200 L3.800,5 Z" fill="#d2d2d2"/><path d="M2.600,4.600 Q.8,5 .8,6.800 Q2.800,6.800 3.400,5.400 Z" fill="#d2d2d2"/></svg>
<svg class="a" style="left:4.8px;top:153.3px" width="7.400" height="7.400" viewBox="0 0 7.4 7.4"><circle cx="2.600" cy="4.600" r="2" fill="none" stroke="#d2d2d2" stroke-width=".8"/><path d="M3.400,3.800 L6.200,.8 L6.800,1.600 L4.200,4.400 Z" fill="#d2d2d2"/></svg>
<svg class="a" style="left:4.8px;top:163.3px" width="7.400" height="7.400" viewBox="0 0 7.4 7.4"><path d="M3.800,.8 L6.600,3.600 L4,6.200 H2.400 L1,4.800 Z" fill="#d2d2d2"/><path d="M1,6.600 H6.400" stroke="#d2d2d2" stroke-width=".5"/></svg>
<div class="a" style="left:3.4px;top:172.2px;width:10.6px;height:9.6px;background:#262626;border-radius:1.5px"></div>
<svg class="a" style="left:4.8px;top:173.3px" width="7.400" height="7.400" viewBox="0 0 7.4 7.4"><path d="M1.600,2.600 A2.700,2.700 0 1 1 1.400,5" fill="none" stroke="#f0f0f0" stroke-width=".9"/><path d="M.4,1.200 L1.400,3.400 L3.400,2.200 Z" fill="#f0f0f0"/></svg>
<svg class="a" style="left:4.8px;top:183.3px" width="7.400" height="7.400" viewBox="0 0 7.4 7.4"><rect x=".8" y="3" width="3.600" height="3.600" fill="none" stroke="#d2d2d2" stroke-width=".6"/><rect x="2.400" y=".8" width="4.200" height="4.200" fill="none" stroke="#d2d2d2" stroke-width=".6" stroke-dasharray=".9 .6"/></svg>
<svg class="a" style="left:4.8px;top:193.3px" width="7.400" height="7.400" viewBox="0 0 7.4 7.4"><path d="M1,5.800 Q2.400,1 3.600,3.600 T6.400,2" fill="none" stroke="#d2d2d2" stroke-width=".9"/><path d="M1,6.600 H3" stroke="#d2d2d2" stroke-width=".6"/></svg>
<svg class="a" style="left:4.8px;top:203.3px" width="7.400" height="7.400" viewBox="0 0 7.4 7.4"><rect x="1" y="1.400" width="5" height="4.600" fill="none" stroke="#d2d2d2" stroke-width=".6"/><rect x=".4" y=".8" width="1.400" height="1.400" fill="#d2d2d2"/><rect x="5.400" y="5.200" width="1.400" height="1.400" fill="#d2d2d2"/><path d="M3.400,3 L5,5.800 L5.400,4.600 Z" fill="#d2d2d2"/></svg>
<svg class="a" style="left:4.8px;top:213.3px" width="7.400" height="7.400" viewBox="0 0 7.4 7.4"><circle cx="2.600" cy="3" r="2" fill="none" stroke="#d2d2d2" stroke-width=".6"/><circle cx="4.600" cy="4.400" r="2" fill="none" stroke="#d2d2d2" stroke-width=".6"/><path d="M5,5.400 L6.800,7" stroke="#d2d2d2" stroke-width=".6"/></svg>
<svg class="a" style="left:4.8px;top:222.8px" width="7.400" height="7.400" viewBox="0 0 7.4 7.4"><path d="M.8,6.400 L3.600,.8 L6.400,6.400 Z M2,4 H5.200 M1.400,5.200 H5.800 M3.600,.8 V6.400" fill="none" stroke="#d2d2d2" stroke-width=".5"/></svg>
<svg class="a" style="left:4.8px;top:233.0px" width="7.400" height="7.400" viewBox="0 0 7.4 7.4"><rect x="1" y="1" width="5.200" height="5.200" fill="none" stroke="#d2d2d2" stroke-width=".6"/><path d="M1,3.600 Q3.600,2.400 6.200,3.600 M3.600,1 Q2.600,3.600 3.600,6.200" fill="none" stroke="#d2d2d2" stroke-width=".5"/></svg>
<svg class="a" style="left:4.8px;top:243.10000000000002px" width="7.400" height="7.400" viewBox="0 0 7.4 7.4"><rect x="1" y="1.200" width="5.400" height="5" fill="#d2d2d2"/><rect x="1" y="1.200" width="2.600" height="5" fill="#777"/></svg>
<svg class="a" style="left:4.8px;top:253.10000000000002px" width="7.400" height="7.400" viewBox="0 0 7.4 7.4"><path d="M5.200,.6 L6.600,2 L5.600,3 L6,3.400 L5.400,4 L5,3.600 L2,6.600 L.8,6.800 L1,5.600 L4,2.600 L3.600,2.200 L4.200,1.600 L4.600,2 Z" fill="#d2d2d2"/></svg>
<svg class="a" style="left:4.8px;top:263.1px" width="7.400" height="7.400" viewBox="0 0 7.4 7.4"><circle cx="2" cy="5" r="1.400" fill="#d2d2d2"/><rect x="4" y="1" width="2.400" height="2.400" fill="#d2d2d2"/><path d="M2.600,4.200 L4.200,2.800" stroke="#d2d2d2" stroke-width=".5"/></svg>
<svg class="a" style="left:4.8px;top:273.2px" width="7.400" height="7.400" viewBox="0 0 7.4 7.4"><rect x="2" y="3" width="3" height="3.600" fill="#d2d2d2"/><rect x="2.800" y="1.800" width="1.400" height="1.200" fill="#d2d2d2"/><path d="M5,1 L6.400,.4 M5.200,1.800 L6.600,1.800 M5,2.600 L6.400,3.200" stroke="#d2d2d2" stroke-width=".5"/></svg>
<svg class="a" style="left:4.8px;top:283.3px" width="7.400" height="7.400" viewBox="0 0 7.4 7.4"><path d="M.8,.8 V6.400 H6.600" fill="none" stroke="#d2d2d2" stroke-width=".5"/><rect x="1.800" y="3.400" width="1.200" height="3" fill="#d2d2d2"/><rect x="3.400" y="1.600" width="1.200" height="4.800" fill="#d2d2d2"/><rect x="5" y="2.800" width="1.200" height="3.600" fill="#d2d2d2"/></svg>
<svg class="a" style="left:4.8px;top:293.5px" width="7.400" height="7.400" viewBox="0 0 7.4 7.4"><path d="M2,.4 V6.800 M.4,2 H6.800 M5.200,.4 V6.800 M.4,5.200 H6.800" fill="none" stroke="#d2d2d2" stroke-width=".5"/></svg>
<svg class="a" style="left:4.8px;top:303.6px" width="7.400" height="7.400" viewBox="0 0 7.4 7.4"><path d="M1,6.400 L5.400,1 L6.400,2 L2.600,6.400 Z" fill="#d2d2d2"/><path d="M.8,6.600 H3" stroke="#d2d2d2" stroke-width=".5"/></svg>
<svg class="a" style="left:4.8px;top:313.7px" width="7.400" height="7.400" viewBox="0 0 7.4 7.4"><path d="M3.800,.8 L6.600,3.600 L4,6.200 H2.400 L1,4.800 Z" fill="#d2d2d2"/><path d="M1,6.600 H6.400" stroke="#d2d2d2" stroke-width=".5"/></svg>
<svg class="a" style="left:4.8px;top:323.7px" width="7.400" height="7.400" viewBox="0 0 7.4 7.4"><path d="M1.400,3.600 V5 Q1.400,6.800 3.400,6.800 Q5.600,6.800 5.800,5 L6.200,2.600 L5.400,2.400 L5,3.600 V1.200 H4.200 V3.200 V.8 H3.400 V3.200 V1.200 H2.600 V4 L2,3.200 Z" fill="#d2d2d2"/></svg>
<svg class="a" style="left:4.8px;top:333.7px" width="7.400" height="7.400" viewBox="0 0 7.4 7.4"><circle cx="3" cy="3" r="2.200" fill="none" stroke="#d2d2d2" stroke-width=".8"/><path d="M4.600,4.600 L6.600,6.600" stroke="#d2d2d2" stroke-width="1"/></svg>
<svg class="a" style="left:2.2px;top:345.4px" width="4" height="4" viewBox="0 0 4 4"><rect x=".2" y=".2" width="2.200" height="2.200" fill="#e0e0e0"/><rect x="1.600" y="1.600" width="2.200" height="2.200" fill="none" stroke="#e0e0e0" stroke-width=".5"/></svg>
<svg class="a" style="left:11px;top:345.4px" width="4" height="4" viewBox="0 0 4 4"><path d="M.6,1 Q3,.6 3.200,3.400 M.6,1 L1.800,.2 M.6,1 L1.600,2" fill="none" stroke="#e0e0e0" stroke-width=".5"/></svg>
<div class="a" style="left:2.4px;top:353px;width:7.6px;height:7.4px;background:#fbfbfb;border:0.4px solid #999"></div>
<svg class="a" style="left:6.6px;top:357px" width="8" height="8" viewBox="0 0 8 8"><rect x=".4" y=".4" width="7.200" height="7.200" fill="#fff"/><path d="M.8,7.200 L7.200,.8" stroke="#e0202a" stroke-width="1.500"/><rect x="2.600" y="2.600" width="2.800" height="2.800" fill="#4a4a4a"/><path d="M2.600,5.400 L5.400,2.600" stroke="#e0202a" stroke-width="1"/></svg>
<div class="a" style="left:2.6px;top:367.6px;width:3.8px;height:3.8px;background:#efefef;"></div>
<div class="a" style="left:7px;top:367.6px;width:3.8px;height:3.8px;background:#777;"></div>
<svg class="a" style="left:11.200px;top:367.400px" width="4.200" height="4.200" viewBox="0 0 4.2 4.2"><rect x=".2" y=".2" width="3.800" height="3.800" fill="#fff"/><path d="M.4,3.800 L3.800,.4" stroke="#e0202a" stroke-width=".9"/></svg>
<svg class="a" style="left:5.600px;top:374.600px" width="6" height="5.600" viewBox="0 0 6 5.6"><circle cx="3" cy="2.400" r="1.900" fill="#bdbdbd"/><rect x="1.400" y="4" width="3.200" height="1.400" fill="#bdbdbd"/></svg>
<svg class="a" style="left:4.600px;top:384px" width="8" height="6.400" viewBox="0 0 8 6.4"><rect x="2.200" y=".4" width="5.400" height="4" fill="none" stroke="#cfcfcf" stroke-width=".6"/><rect x=".4" y="2" width="5.400" height="4" fill="#4a4a4a" stroke="#cfcfcf" stroke-width=".6"/></svg>
<div class="a t" style="left:5.50px;top:397.00px;font-size:6px;line-height:7.20px;color:#b5b5b5;">…</div>
<div class="a" style="left:17px;top:592.9px;width:803px;height:0.6px;background:#3a3230;"></div>
<div class="a t" style="left:21.00px;top:594.16px;font-size:4.9px;line-height:5.88px;color:#e0e0e0;letter-spacing:-0.339px;">300%</div>
<svg class="a" style="left:42.0px;top:596.3399999999999px" width="3.2" height="1.92" viewBox="0 0 4 2.4"><path d="M0.3,0.3 L2,2 L3.7,0.3" fill="none" stroke="#b8b8b8" stroke-width="0.8"/></svg>
<div class="a t" style="left:50.50px;top:594.16px;font-size:4.9px;line-height:5.88px;color:#e0e0e0;">0°</div>
<svg class="a" style="left:72.4px;top:596.3399999999999px" width="3.2" height="1.92" viewBox="0 0 4 2.4"><path d="M0.3,0.3 L2,2 L3.7,0.3" fill="none" stroke="#b8b8b8" stroke-width="0.8"/></svg>
<div class="a" style="left:76.5px;top:594px;width:40px;height:14px;background:#404342;"></div>
<svg class="a" style="left:80px;top:595.2px" width="3" height="4" viewBox="0 0 3 4"><path d="M2.600,.3 L.6,2 L2.600,3.700" fill="none" stroke="#6a6a6a" stroke-width=".6"/></svg>
<svg class="a" style="left:86px;top:595.2px" width="3" height="4" viewBox="0 0 3 4"><path d="M2.600,.3 L.6,2 L2.600,3.700" fill="none" stroke="#6a6a6a" stroke-width=".6"/></svg>
<div class="a t" style="left:97.50px;top:594.22px;font-size:4.8px;line-height:5.76px;color:#cfcfcf;">1</div>
<svg class="a" style="left:104px;top:595.2px" width="3" height="4" viewBox="0 0 3 4"><path d="M.4,.3 L2.400,2 L.4,3.700" fill="none" stroke="#6a6a6a" stroke-width=".6"/></svg>
<svg class="a" style="left:110px;top:595.2px" width="3" height="4" viewBox="0 0 3 4"><path d="M.4,.3 L2.400,2 L.4,3.700" fill="none" stroke="#6a6a6a" stroke-width=".6"/></svg>
<svg class="a" style="left:113.9px;top:596.3399999999999px" width="3.2" height="1.92" viewBox="0 0 4 2.4"><path d="M0.3,0.3 L2,2 L3.7,0.3" fill="none" stroke="#b8b8b8" stroke-width="0.8"/></svg>
<div class="a" style="left:119px;top:594px;width:107px;height:14px;background:#404342;"></div>
<div class="a t" style="left:174.50px;top:594.28px;font-size:4.7px;line-height:5.64px;color:#9a9a9a;">回転</div>
<svg class="a" style="left:222.400px;top:595.2px" width="3" height="4" viewBox="0 0 3 4"><path d="M.4,.3 L2.600,2 L.4,3.700 Z" fill="#c8c8c8"/></svg>
<svg class="a" style="left:229.600px;top:595.2px" width="3" height="4" viewBox="0 0 3 4"><path d="M2.600,.3 L.4,2 L2.600,3.700 Z" fill="#8a8a8a"/></svg>
<div class="a" style="left:234px;top:594.3px;width:580px;height:14px;background:#4a4c4b;"></div>
<div class="a" style="left:529px;top:594.8px;width:12px;height:4.6px;background:#5c5e5d;border-radius:2px"></div>
<div class="a" style="left:355.800px;top:210.800px;width:149.600px;height:66px;border-radius:3.400px;background:#4d4d4d;box-shadow:0 5px 13px rgba(0,0,0,.42),0 1px 3px rgba(0,0,0,.3);overflow:hidden"><div class="a" style="left:0;top:0;width:100%;height:11.800px;background:linear-gradient(180deg,#dcdbd7,#cfcecb);border-bottom:0.500px solid #9c9c9c"></div></div>
<div class="a t" style="left:416.10px;top:213.90px;font-size:5px;line-height:6.00px;color:#2f2f2f;font-weight:bold;letter-spacing:-0.231px;">パンク・膨張</div>
<div class="a" style="left:361.7px;top:235.5px;width:104px;height:0.7px;background:#6a6a6a;"></div>
<div class="a" style="left:413.7px;top:234.2px;width:0.6px;height:3.2px;background:#6a6a6a;"></div>
<div class="a" style="left:404.4px;top:233.2px;width:5.2px;height:5.2px;background:#3c98ea;border-radius:50%"></div>
<div class="a t" style="left:362.00px;top:239.96px;font-size:4.4px;line-height:5.28px;color:#9a9a9a;">収縮</div>
<div class="a t" style="left:457.50px;top:239.96px;font-size:4.4px;line-height:5.28px;color:#9a9a9a;">膨張</div>
<div class="a" style="left:468.3px;top:232px;width:31px;height:7.8px;background:#fff;border:0.600px solid #5a9be0"></div>
<div class="a" style="left:469.4px;top:232.9px;width:15.5px;height:6px;background:#b6d6fb;"></div>
<div class="a t" style="left:470.20px;top:232.94px;font-size:5.1px;line-height:6.12px;color:#2a5fb0;letter-spacing:0.531px;">-30%</div>
<div class="a" style="left:362.4px;top:256.4px;width:5px;height:5px;background:#ececec;border-radius:1px"></div>
<svg class="a" style="left:363px;top:257.200px" width="3.800" height="3.600" viewBox="0 0 3.8 3.6"><path d="M.4,1.800 L1.500,3 L3.400,.5" fill="none" stroke="#333" stroke-width=".8"/></svg>
<div class="a t" style="left:369.50px;top:256.08px;font-size:5.2px;line-height:6.24px;color:#f2f2f2;font-weight:bold;letter-spacing:0.012px;">プレビュー</div>
<div class="a" style="left:420.2px;top:253.7px;width:39px;height:11px;background:transparent;border:0.800px solid #c6c6c6;border-radius:5.500px"></div>
<div class="a t" style="left:426.20px;top:256.24px;font-size:5.1px;line-height:6.12px;color:#f0f0f0;font-weight:bold;letter-spacing:0.379px;">キャンセル</div>
<div class="a" style="left:461px;top:253.7px;width:38.8px;height:11px;background:transparent;border:1.100px solid #efefef;border-radius:5.500px"></div>
<div class="a t" style="left:476.27px;top:256.00px;font-size:5.5px;line-height:6.60px;color:#f4f4f4;font-weight:bold;">OK</div>
<div class="a" style="left:504.6px;top:240px;width:18.8px;height:18.8px;background:radial-gradient(circle,rgba(246,204,92,.95) 0%,rgba(246,204,92,.88) 62%,rgba(246,204,92,0) 100%);border-radius:50%"></div>
<svg class="a" style="left:511.6px;top:247.6px" width="4.4" height="6.2" viewBox="0 0 5 7"><path d="M.4,.3 L.4,5.400 L1.700,4.300 L2.600,6.500 L3.500,6.100 L2.600,4 L4.300,3.900 Z" fill="#1a1a1a"/></svg>
</div></div></body></html>
